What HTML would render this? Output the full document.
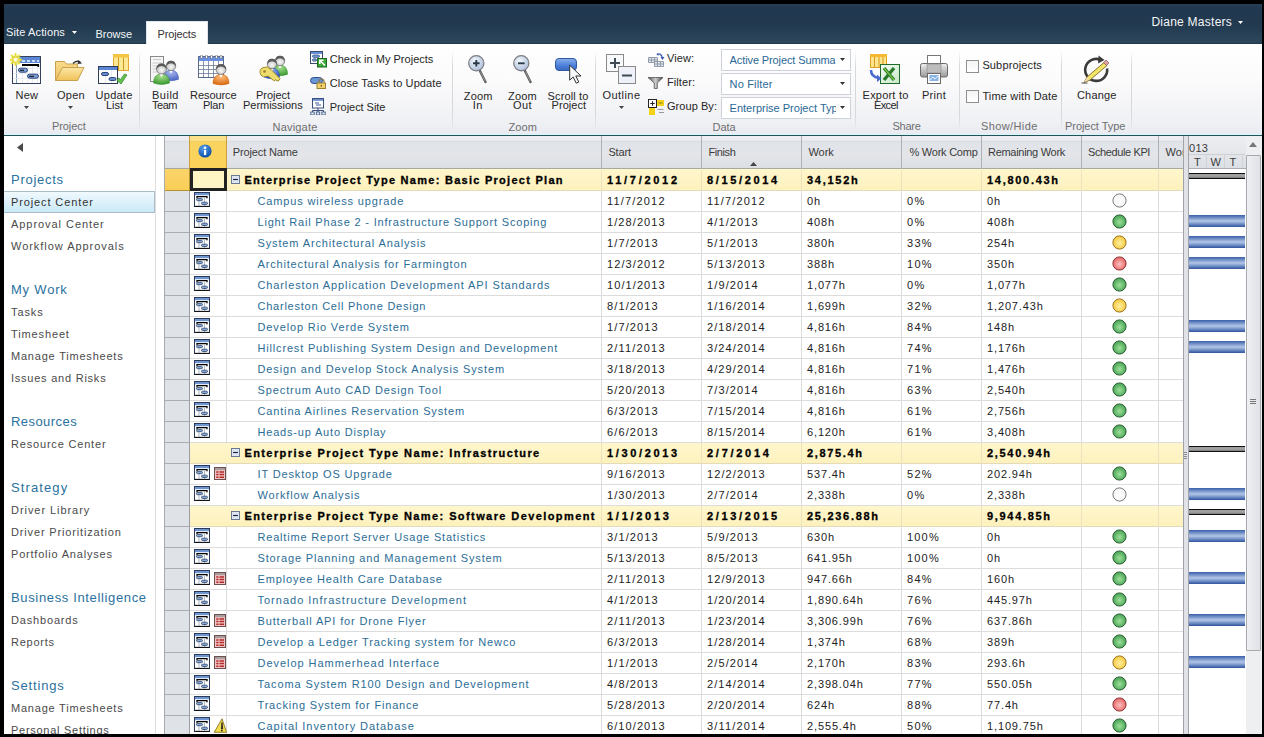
<!DOCTYPE html><html><head><meta charset="utf-8"><style>
*{margin:0;padding:0;box-sizing:border-box}
html,body{width:1264px;height:737px;overflow:hidden;background:#000}
body{position:relative;font-family:"Liberation Sans",sans-serif}
.t{position:absolute;white-space:nowrap;line-height:1}
.r{position:absolute;display:block}
</style></head><body><div class="r" style="left:4px;top:4px;width:1258px;height:40px;background:linear-gradient(#273d53 0,#203850 12%,#22394f 50%,#2a4459 88%,#2c475c 96%,#1d3040 100%)"></div><div class="t" style="left:6.00px;top:27.00px;font-size:11px;color:#f4f6f8;letter-spacing:0.127px;">Site Actions</div><svg class="r" style="left:71.5px;top:31px" width="6" height="4" viewBox="0 0 6 4"><path d="M0 0H5L2.5 3Z" fill="#fff"/></svg><div class="t" style="left:95.50px;top:29.00px;font-size:11px;color:#f4f6f8;letter-spacing:-0.013px;">Browse</div><div class="r" style="left:146px;top:21px;width:62px;height:23px;background:#fff;border:1px solid #dfe4ea;border-bottom:none"></div><div class="t" style="left:157.50px;top:29.00px;font-size:11px;color:#333;letter-spacing:-0.154px;">Projects</div><div class="t" style="left:1151.40px;top:16.00px;font-size:12px;color:#f4f6f8;letter-spacing:0.257px;">Diane Masters</div><svg class="r" style="left:1238px;top:21px" width="6" height="4" viewBox="0 0 6 4"><path d="M0 0H5L2.5 3Z" fill="#fff"/></svg><div class="r" style="left:4px;top:44px;width:1258px;height:90px;background:linear-gradient(#ffffff,#fbfbfc 40%,#f0f1f4 85%,#e9ebf3)"></div><div class="r" style="left:4px;top:134px;width:1258px;height:1px;background:#d6f6f8"></div><div class="r" style="left:4px;top:135px;width:1258px;height:1px;background:#24525a"></div><div class="r" style="left:139px;top:50px;width:1px;height:82px;background:linear-gradient(rgba(210,212,216,0),#d6d8dc 20%,#d6d8dc 80%,rgba(210,212,216,0))"></div><div class="r" style="left:452px;top:50px;width:1px;height:82px;background:linear-gradient(rgba(210,212,216,0),#d6d8dc 20%,#d6d8dc 80%,rgba(210,212,216,0))"></div><div class="r" style="left:595px;top:50px;width:1px;height:82px;background:linear-gradient(rgba(210,212,216,0),#d6d8dc 20%,#d6d8dc 80%,rgba(210,212,216,0))"></div><div class="r" style="left:855px;top:50px;width:1px;height:82px;background:linear-gradient(rgba(210,212,216,0),#d6d8dc 20%,#d6d8dc 80%,rgba(210,212,216,0))"></div><div class="r" style="left:959px;top:50px;width:1px;height:82px;background:linear-gradient(rgba(210,212,216,0),#d6d8dc 20%,#d6d8dc 80%,rgba(210,212,216,0))"></div><div class="r" style="left:1061px;top:50px;width:1px;height:82px;background:linear-gradient(rgba(210,212,216,0),#d6d8dc 20%,#d6d8dc 80%,rgba(210,212,216,0))"></div><div class="r" style="left:1131px;top:50px;width:1px;height:82px;background:linear-gradient(rgba(210,212,216,0),#d6d8dc 20%,#d6d8dc 80%,rgba(210,212,216,0))"></div><svg class="r" style="left:10px;top:53px" width="34" height="34" viewBox="0 0 34 34">
<defs><radialGradient id="g1"><stop offset="0" stop-color="#fffbd0"/><stop offset="0.5" stop-color="#f4ec70" stop-opacity="0.9"/><stop offset="1" stop-color="#f4ec70" stop-opacity="0"/></radialGradient></defs>
<rect x="2.5" y="3.5" width="28" height="27" fill="#fff" stroke="#34425e"/>
<rect x="3" y="4" width="27" height="6" fill="#5a86d4"/>
<rect x="12" y="7" width="3" height="2" fill="#c8daf4"/><rect x="17" y="7" width="3" height="2" fill="#c8daf4"/><rect x="22" y="7" width="3" height="2" fill="#c8daf4"/><rect x="27" y="7" width="2" height="2" fill="#c8daf4"/>
<path d="M6.5 10v20" stroke="#8a9cbc"/>
<path d="M12.5 13v17M17.5 13v17M22.5 13v17M27.5 13v17M3 15.5h27M3 20.5h27M3 25.5h27" stroke="#e2e8f0" stroke-width="0.8"/>
<rect x="12" y="11" width="17" height="2" fill="#000"/><rect x="27.5" y="11" width="1.6" height="3" fill="#000"/>
<rect x="8.5" y="15.2" width="9" height="4" rx="2" fill="#7f9ed4" stroke="#1f3a70" stroke-width="0.9"/><rect x="10" y="16.8" width="4" height="1" fill="#111"/>
<rect x="17.5" y="21.2" width="11" height="4" rx="2" fill="#7f9ed4" stroke="#1f3a70" stroke-width="0.9"/><rect x="19" y="22.8" width="5" height="1" fill="#111"/>
<circle cx="5.6" cy="6.7" r="6.5" fill="url(#g1)"/>
<g stroke="#e8dc30" stroke-width="1.4"><path d="M1 2l9 9M10 2l-9 9M5.6 0v13M-1 6.7h13"/></g>
<circle cx="5.6" cy="6.7" r="2" fill="#fff8e0"/></svg><div class="t" style="left:15.60px;top:90.00px;font-size:11px;color:#262626;letter-spacing:0.132px;">New</div><svg class="r" style="left:24px;top:106px" width="6" height="4" viewBox="0 0 6 4"><path d="M0 0H5L2.5 3Z" fill="#444"/></svg><svg class="r" style="left:54px;top:53px" width="34" height="34" viewBox="0 0 34 34">
<defs><linearGradient id="g2" x1="0" y1="0" x2="0" y2="1"><stop offset="0" stop-color="#f9dc8c"/><stop offset="1" stop-color="#ecc060"/></linearGradient>
<linearGradient id="g3" x1="0" y1="0" x2="0" y2="1"><stop offset="0" stop-color="#fbe6a4"/><stop offset="1" stop-color="#f0c25a"/></linearGradient></defs>
<path d="M1.5 8.5h9l2 2.5h11v16.5h-22z" fill="url(#g2)" stroke="#c9a050"/>
<path d="M1.5 27.5L8.5 14.5h21.5l-6.5 13z" fill="url(#g3)" stroke="#c9a050"/>
<path d="M19 10.5q3.5-4 7.5-1" fill="none" stroke="#333" stroke-width="1.3"/><path d="M24.5 7l3.5 3.5-4.5 0.5z" fill="#333"/></svg><div class="t" style="left:57.00px;top:90.00px;font-size:11px;color:#262626;letter-spacing:0.273px;">Open</div><svg class="r" style="left:68px;top:106px" width="6" height="4" viewBox="0 0 6 4"><path d="M0 0H5L2.5 3Z" fill="#444"/></svg><svg class="r" style="left:97px;top:53px" width="34" height="34" viewBox="0 0 34 34">
<rect x="16.5" y="1.5" width="15" height="16" fill="#fde896" stroke="#e0a830"/>
<rect x="16" y="1" width="16" height="3.5" fill="#f5c440"/>
<path d="M21.5 4.5V17.5M26.5 4.5V17.5" stroke="#d09a20"/>
<rect x="1.5" y="13.5" width="19" height="17" fill="#fff" stroke="#2e3a56"/>
<rect x="2" y="14" width="18" height="3" fill="#5a86d4"/>
<path d="M8.5 17v13M14.5 17v13" stroke="#dfe6f0" stroke-width="0.8"/>
<rect x="4.5" y="19.5" width="7" height="3" rx="1.5" fill="#6a8ed0" stroke="#1f3a70" stroke-width="0.9"/>
<rect x="12" y="24.5" width="7" height="3" rx="1.5" fill="#6a8ed0" stroke="#1f3a70" stroke-width="0.9"/>
<path d="M20 27.5l4 3.5 6-9-2.5-1-4 5.5-2-1.5z" fill="#64c050" stroke="#3a9030" stroke-width="0.8"/></svg><div class="t" style="left:95.60px;top:90.00px;font-size:11px;color:#262626;letter-spacing:0.239px;">Update</div><div class="t" style="left:106.00px;top:100.00px;font-size:11px;color:#262626;letter-spacing:-0.029px;">List</div><div class="t" style="left:52.00px;top:121.00px;font-size:11px;color:#6e6e6e;letter-spacing:-0.091px;">Project</div><svg class="r" style="left:149px;top:55px" width="32" height="32" viewBox="0 0 32 32">
<rect x="1.5" y="1.5" width="13" height="25" fill="#f6f6f6" stroke="#8a8a8a"/>
<path d="M4 4.5h8M3.5 8h10M3.5 11h10M3.5 14h10M3.5 17h10" stroke="#c0c0c0" stroke-width="0.8"/><defs><radialGradient id="g4" cx="0.5" cy="0.2" r="0.8"><stop offset="0" stop-color="#a8b8f0"/><stop offset="1" stop-color="#4a64c0"/></radialGradient>
<radialGradient id="g5" cx="0.5" cy="0.6" r="0.6"><stop offset="0" stop-color="#fafafa"/><stop offset="1" stop-color="#b8b8b8"/></radialGradient></defs>
<path d="M14.4 24.299999999999997q0-9 7.6-9q7.6 0 7.6 9q-7.6 3 -15.2 0z" fill="url(#g4)" stroke="#4a64c0" stroke-width="0.6"/>
<path d="M20.1 15.75l1.9 2.8499999999999996 1.9-2.8499999999999996z" fill="#fff"/>
<circle cx="22" cy="11" r="4.75" fill="url(#g5)" stroke="#666" stroke-width="0.7"/>
<path d="M17.25 11q0-5.225 4.75-5.225q4.75 0 4.75 5.225q-1.9-2.8499999999999996 -4.75-2.8499999999999996q-2.8499999999999996 0 -4.75 2.8499999999999996z" fill="#5a5a5a"/><defs><radialGradient id="g6" cx="0.5" cy="0.2" r="0.8"><stop offset="0" stop-color="#a8e090"/><stop offset="1" stop-color="#3a9a30"/></radialGradient>
<radialGradient id="g7" cx="0.5" cy="0.6" r="0.6"><stop offset="0" stop-color="#fafafa"/><stop offset="1" stop-color="#b8b8b8"/></radialGradient></defs>
<path d="M4.5 28.0q0-9 8.0-9q8.0 0 8.0 9q-8.0 3 -16.0 0z" fill="url(#g6)" stroke="#3a9a30" stroke-width="0.6"/>
<path d="M10.5 19.0l2.0 3.0 2.0-3.0z" fill="#fff"/>
<circle cx="12.5" cy="14" r="5.0" fill="url(#g7)" stroke="#666" stroke-width="0.7"/>
<path d="M7.5 14q0-5.5 5.0-5.5q5.0 0 5.0 5.5q-2.0-3.0 -5.0-3.0q-3.0 0 -5.0 3.0z" fill="#5a5a5a"/></svg><div class="t" style="left:152.00px;top:90.00px;font-size:11px;color:#262626;letter-spacing:0.508px;">Build</div><div class="t" style="left:152.00px;top:100.00px;font-size:11px;color:#262626;letter-spacing:-0.474px;">Team</div><svg class="r" style="left:198px;top:55px" width="34" height="34" viewBox="0 0 34 34">
<rect x="0.5" y="1.5" width="25" height="21" fill="#fff" stroke="#5a6a8a"/>
<rect x="1" y="2" width="24" height="4" fill="#6a8ee0"/>
<g fill="#fff" stroke="#444" stroke-width="0.5"><rect x="2.5" y="0" width="2" height="3.5" rx="1"/><rect x="7.5" y="0" width="2" height="3.5" rx="1"/><rect x="12.5" y="0" width="2" height="3.5" rx="1"/><rect x="17.5" y="0" width="2" height="3.5" rx="1"/><rect x="22" y="0" width="2" height="3.5" rx="1"/></g>
<path d="M1 10.5h24M1 14.5h24M1 18.5h24M5.5 6v16M10.5 6v16M15.5 6v16M20.5 6v16" stroke="#6a7a98" stroke-width="0.8"/><defs><radialGradient id="g8" cx="0.5" cy="0.2" r="0.8"><stop offset="0" stop-color="#ffc080"/><stop offset="1" stop-color="#d86a10"/></radialGradient>
<radialGradient id="g9" cx="0.5" cy="0.6" r="0.6"><stop offset="0" stop-color="#fafafa"/><stop offset="1" stop-color="#b8b8b8"/></radialGradient></defs>
<path d="M15.0 28.5q0-9 8.0-9q8.0 0 8.0 9q-8.0 3 -16.0 0z" fill="url(#g8)" stroke="#d86a10" stroke-width="0.6"/>
<path d="M21.0 19.5l2.0 3.0 2.0-3.0z" fill="#fff"/>
<circle cx="23" cy="14.5" r="5.0" fill="url(#g9)" stroke="#666" stroke-width="0.7"/>
<path d="M18.0 14.5q0-5.5 5.0-5.5q5.0 0 5.0 5.5q-2.0-3.0 -5.0-3.0q-3.0 0 -5.0 3.0z" fill="#5a5a5a"/></svg><div class="t" style="left:190.00px;top:90.00px;font-size:11px;color:#262626;letter-spacing:-0.059px;">Resource</div><div class="t" style="left:203.00px;top:100.00px;font-size:11px;color:#262626;letter-spacing:-0.254px;">Plan</div><svg class="r" style="left:258px;top:53px" width="34" height="34" viewBox="0 0 34 34"><defs><radialGradient id="g10" cx="0.5" cy="0.2" r="0.8"><stop offset="0" stop-color="#a8e090"/><stop offset="1" stop-color="#3a9a30"/></radialGradient>
<radialGradient id="g11" cx="0.5" cy="0.6" r="0.6"><stop offset="0" stop-color="#fafafa"/><stop offset="1" stop-color="#b8b8b8"/></radialGradient></defs>
<path d="M14.4 21.299999999999997q0-9 7.6-9q7.6 0 7.6 9q-7.6 3 -15.2 0z" fill="url(#g10)" stroke="#3a9a30" stroke-width="0.6"/>
<path d="M20.1 12.75l1.9 2.8499999999999996 1.9-2.8499999999999996z" fill="#fff"/>
<circle cx="22" cy="8" r="4.75" fill="url(#g11)" stroke="#666" stroke-width="0.7"/>
<path d="M17.25 8q0-5.225 4.75-5.225q4.75 0 4.75 5.225q-1.9-2.8499999999999996 -4.75-2.8499999999999996q-2.8499999999999996 0 -4.75 2.8499999999999996z" fill="#5a5a5a"/><defs><radialGradient id="g12" cx="0.5" cy="0.2" r="0.8"><stop offset="0" stop-color="#8aa8f0"/><stop offset="1" stop-color="#2a4ac0"/></radialGradient>
<radialGradient id="g13" cx="0.5" cy="0.6" r="0.6"><stop offset="0" stop-color="#fafafa"/><stop offset="1" stop-color="#b8b8b8"/></radialGradient></defs>
<path d="M6.4 24.299999999999997q0-9 7.6-9q7.6 0 7.6 9q-7.6 3 -15.2 0z" fill="url(#g12)" stroke="#2a4ac0" stroke-width="0.6"/>
<path d="M12.1 15.75l1.9 2.8499999999999996 1.9-2.8499999999999996z" fill="#fff"/>
<circle cx="14" cy="11" r="4.75" fill="url(#g13)" stroke="#666" stroke-width="0.7"/>
<path d="M9.25 11q0-5.225 4.75-5.225q4.75 0 4.75 5.225q-1.9-2.8499999999999996 -4.75-2.8499999999999996q-2.8499999999999996 0 -4.75 2.8499999999999996z" fill="#5a5a5a"/>
<path d="M3 22q-3-5 2-7.5q5-2 8 2l9 9-1 2-2 0.5-1.5-1.5-1 1.5-1.5-1-5-4q-5 2-7-1z" fill="#ecdc70" stroke="#9a8420" stroke-width="0.9"/>
<circle cx="6.5" cy="18.5" r="1.3" fill="#9a7a20"/></svg><div class="t" style="left:256.00px;top:90.00px;font-size:11px;color:#262626;letter-spacing:-0.033px;">Project</div><div class="t" style="left:243.00px;top:100.00px;font-size:11px;color:#262626;letter-spacing:-0.027px;">Permissions</div><svg class="r" style="left:310px;top:50px" width="18" height="18" viewBox="0 0 18 18">
<rect x="0.5" y="1.5" width="12" height="12" fill="#fff" stroke="#3a4a6a"/>
<rect x="1" y="2" width="11" height="2" fill="#6a90dc"/>
<rect x="2.5" y="5" width="7" height="2.4" rx="1.2" fill="#7a9ad0" stroke="#2a4a80" stroke-width="0.7"/>
<rect x="2.5" y="8.8" width="4" height="2.4" rx="1.2" fill="#7a9ad0" stroke="#2a4a80" stroke-width="0.7"/>
<rect x="7.5" y="8.5" width="9" height="8.5" fill="#3ca83c" stroke="#1a6a1a"/>
<path d="M15 15.5L10 10.5M9.8 14V10.2h3.8" stroke="#fff" stroke-width="1.5" fill="none"/></svg><div class="t" style="left:329.70px;top:54.00px;font-size:11px;color:#262626;letter-spacing:0.020px;">Check in My Projects</div><svg class="r" style="left:310px;top:76px" width="18" height="14" viewBox="0 0 18 14">
<rect x="0.5" y="1.5" width="12" height="6" rx="3" fill="#6a94d8" stroke="#30508a"/>
<path d="M9 7V5.5a2.5 2.5 0 0 1 5 0V7" fill="none" stroke="#8a7a50" stroke-width="1.2"/>
<rect x="7" y="7" width="8.5" height="5.5" fill="#f2d070" stroke="#a08030"/>
<rect x="10.7" y="9" width="1.2" height="1.6" fill="#6a5010"/></svg><div class="t" style="left:329.70px;top:78.00px;font-size:11px;color:#262626;letter-spacing:0.102px;">Close Tasks to Update</div><svg class="r" style="left:310px;top:98px" width="17" height="17" viewBox="0 0 17 17">
<rect x="2.5" y="0.5" width="11" height="9.5" fill="#fff" stroke="#3a5080"/>
<rect x="3" y="1" width="10" height="1.8" fill="#6a8ac8"/>
<path d="M5 5h4M6 7h5" stroke="#3a5a9a" stroke-width="1"/>
<path d="M8 10v2.5M2.5 12.5h11M2.5 12.5v1.5M8 12.5v1.5M13.5 12.5v1.5" stroke="#3a5080"/>
<rect x="0.8" y="14" width="3.4" height="3" fill="#dfe6f2" stroke="#3a5080" stroke-width="0.8"/><rect x="6.3" y="14" width="3.4" height="3" fill="#dfe6f2" stroke="#3a5080" stroke-width="0.8"/><rect x="11.8" y="14" width="3.4" height="3" fill="#dfe6f2" stroke="#3a5080" stroke-width="0.8"/></svg><div class="t" style="left:329.70px;top:102.00px;font-size:11px;color:#262626;letter-spacing:-0.045px;">Project Site</div><div class="t" style="left:272.50px;top:122.00px;font-size:11px;color:#6e6e6e;letter-spacing:0.198px;">Navigate</div><svg class="r" style="left:465px;top:54px" width="26" height="32" viewBox="0 0 26 32"><defs><radialGradient id="g14" cx="0.4" cy="0.35" r="0.7"><stop offset="0" stop-color="#f4f8fc"/><stop offset="1" stop-color="#aabcd8"/></radialGradient></defs>
<path d="M15 17l5.5 11" stroke="#555" stroke-width="2.4" stroke-linecap="round"/><path d="M15.3 17.5l5 10" stroke="#aaa" stroke-width="0.8"/>
<circle cx="11.3" cy="9.3" r="7.6" fill="url(#g14)" stroke="#7a7a80" stroke-width="1.2"/><path d="M8 9.3h6.6M11.3 6v6.6" stroke="#2a3a4a" stroke-width="1.9"/></svg><div class="t" style="left:463.80px;top:91.00px;font-size:11px;color:#262626;letter-spacing:0.196px;">Zoom</div><div class="t" style="left:472.80px;top:100.00px;font-size:11px;color:#262626;letter-spacing:0.414px;">In</div><svg class="r" style="left:510px;top:54px" width="26" height="32" viewBox="0 0 26 32"><defs><radialGradient id="g15" cx="0.4" cy="0.35" r="0.7"><stop offset="0" stop-color="#f4f8fc"/><stop offset="1" stop-color="#aabcd8"/></radialGradient></defs>
<path d="M15 17l5.5 11" stroke="#555" stroke-width="2.4" stroke-linecap="round"/><path d="M15.3 17.5l5 10" stroke="#aaa" stroke-width="0.8"/>
<circle cx="11.3" cy="9.3" r="7.6" fill="url(#g15)" stroke="#7a7a80" stroke-width="1.2"/><path d="M8 9.3h6.6" stroke="#2a3a4a" stroke-width="1.9"/></svg><div class="t" style="left:508.00px;top:91.00px;font-size:11px;color:#262626;letter-spacing:0.196px;">Zoom</div><div class="t" style="left:513.00px;top:100.00px;font-size:11px;color:#262626;letter-spacing:0.424px;">Out</div><svg class="r" style="left:554px;top:57px" width="30" height="28" viewBox="0 0 30 28">
<defs><linearGradient id="g16" x1="0" y1="0" x2="0" y2="1"><stop offset="0" stop-color="#8ab0ec"/><stop offset="0.6" stop-color="#4a7ed8"/><stop offset="1" stop-color="#3a68c0"/></linearGradient></defs>
<rect x="1.5" y="1.5" width="21" height="12" rx="3.5" fill="url(#g16)" stroke="#2f5aa0"/>
<path d="M15.7 8.2v15l3.5-3.2 3 6.2 2.6-1.2-3-6h5.2z" fill="#f6f8fa" stroke="#333" stroke-width="1"/></svg><div class="t" style="left:547.60px;top:91.00px;font-size:11px;color:#262626;letter-spacing:0.118px;">Scroll to</div><div class="t" style="left:551.60px;top:100.00px;font-size:11px;color:#262626;letter-spacing:0.024px;">Project</div><div class="t" style="left:508.40px;top:122.00px;font-size:11px;color:#6e6e6e;letter-spacing:0.121px;">Zoom</div><svg class="r" style="left:605px;top:53px" width="33" height="33" viewBox="0 0 33 33">
<rect x="1.5" y="1.5" width="17" height="17" fill="#f8f9fb" stroke="#8a8a8a"/>
<path d="M5 10h10M10 5v10" stroke="#3f4a54" stroke-width="2"/>
<rect x="13.5" y="13.5" width="17" height="17" fill="#eef2f8" stroke="#8a8a8a"/>
<path d="M17 22.5h10" stroke="#3f4a54" stroke-width="2"/></svg><div class="t" style="left:602.50px;top:90.00px;font-size:11px;color:#262626;letter-spacing:0.450px;">Outline</div><svg class="r" style="left:619px;top:106px" width="6" height="4" viewBox="0 0 6 4"><path d="M0 0H5L2.5 3Z" fill="#444"/></svg><svg class="r" style="left:648px;top:51px" width="17" height="17" viewBox="0 0 17 17">
<path d="M0.5 6.5h9v5h-9zM0.5 9h9M3.5 6.5v5M6.5 6.5v5" fill="#dfe4ea" stroke="#8a94a4" stroke-width="0.9"/>
<path d="M6.5 10.5h9v5h-9zM6.5 13h9M9.5 10.5v5M12.5 10.5v5" fill="#dfe4ea" stroke="#8a94a4" stroke-width="0.9"/>
<path d="M9 3.5q4-2 5.5 3.5" fill="none" stroke="#3a5ab0" stroke-width="1.3"/><path d="M12.5 6l2 3 2-3z" fill="#3a5ab0"/><path d="M10 2l-1.5 1.5 2 1.5z" fill="#3a5ab0"/></svg><div class="t" style="left:667.00px;top:53.00px;font-size:11px;color:#262626;letter-spacing:0.060px;">View:</div><svg class="r" style="left:648px;top:77px" width="16" height="12" viewBox="0 0 16 12"><defs><linearGradient id="g17"><stop offset="0" stop-color="#555"/><stop offset="0.5" stop-color="#ccc"/><stop offset="1" stop-color="#444"/></linearGradient></defs>
<path d="M0 0.5h15L9.3 6v5.5H6.2V6z" fill="url(#g17)" stroke="#333" stroke-width="0.6"/></svg><div class="t" style="left:667.00px;top:77.00px;font-size:11px;color:#262626;letter-spacing:0.072px;">Filter:</div><svg class="r" style="left:648px;top:99px" width="17" height="16" viewBox="0 0 17 16">
<rect x="0.5" y="0.5" width="8" height="8" fill="#fff" stroke="#222"/>
<path d="M2.3 4.5h4.4M4.5 2.3v4.4" stroke="#222" stroke-width="1.1"/>
<rect x="9" y="1" width="7" height="6" fill="#f2d21a"/><path d="M10.5 4h4" stroke="#8a7a10"/>
<rect x="1" y="9" width="6" height="7" fill="#f2d21a"/><path d="M9.5 10.5h6M11 13.5h5" stroke="#999"/></svg><div class="t" style="left:667.00px;top:101.00px;font-size:11px;color:#262626;letter-spacing:0.053px;">Group By:</div><div class="r" style="left:721px;top:49px;width:130px;height:22px;background:#fff;border:1px solid #cdd2d8"></div><div class="t" style="left:729.60px;top:55.00px;font-size:11px;color:#2a6896;letter-spacing:-0.110px;clip-path:inset(-2px 0 -2px 0);">Active Project Summa</div><svg class="r" style="left:840px;top:58px" width="6" height="4" viewBox="0 0 6 4"><path d="M0 0H5L2.5 3Z" fill="#333"/></svg><div class="r" style="left:721px;top:73px;width:130px;height:21.5px;background:#fff;border:1px solid #cdd2d8"></div><div class="t" style="left:729.60px;top:79.00px;font-size:11px;color:#2a6896;letter-spacing:0.160px;clip-path:inset(-2px 0 -2px 0);">No Filter</div><svg class="r" style="left:840px;top:82px" width="6" height="4" viewBox="0 0 6 4"><path d="M0 0H5L2.5 3Z" fill="#333"/></svg><div class="r" style="left:721px;top:97px;width:130px;height:21.5px;background:#fff;border:1px solid #cdd2d8"></div><div class="t" style="left:729.60px;top:103.00px;font-size:11px;color:#2a6896;clip-path:polygon(-2px -2px,106.5px -2px,106.5px 20px,-2px 20px);">Enterprise Project Typ</div><svg class="r" style="left:840px;top:106px" width="6" height="4" viewBox="0 0 6 4"><path d="M0 0H5L2.5 3Z" fill="#333"/></svg><div class="r" style="left:721px;top:70px;width:130px;height:3px;background:transparent"></div><div class="t" style="left:712.50px;top:122.00px;font-size:11px;color:#6e6e6e;letter-spacing:-0.059px;">Data</div><svg class="r" style="left:869px;top:53px" width="32" height="32" viewBox="0 0 32 32">
<defs><linearGradient id="g18" x1="0" y1="0" x2="1" y2="1"><stop offset="0" stop-color="#f4fbf4"/><stop offset="1" stop-color="#c8e8c8"/></linearGradient></defs>
<rect x="1.5" y="1.5" width="16" height="13" fill="#fde48e" stroke="#e0a020"/>
<rect x="1" y="1" width="17" height="3" fill="#f5b830"/>
<path d="M5.5 4v10.5M10 4v10.5M14 4v10.5" stroke="#d8981a"/>
<rect x="11.5" y="11.5" width="19" height="19" fill="url(#g18)" stroke="#1e6a2a"/>
<path d="M15 15l10 12M25 15l-10 12" stroke="#2a7a2a" stroke-width="3.4"/><path d="M15 15l10 12" stroke="#7ac84a" stroke-width="1.2"/>
<path d="M2 17q0 7 8 8" fill="none" stroke="#4a6ad0" stroke-width="2.6"/><path d="M8 21.5l4.5 4-4.5 3.5z" fill="#4a6ad0"/></svg><div class="t" style="left:862.60px;top:90.00px;font-size:11px;color:#262626;letter-spacing:0.209px;">Export to</div><div class="t" style="left:874.00px;top:100.00px;font-size:11px;color:#262626;letter-spacing:-0.640px;">Excel</div><svg class="r" style="left:920px;top:54px" width="30" height="31" viewBox="0 0 30 31">
<defs><linearGradient id="g19" x1="0" y1="0" x2="0" y2="1"><stop offset="0" stop-color="#f0f0f0"/><stop offset="0.5" stop-color="#c4c4c4"/><stop offset="1" stop-color="#9a9a9a"/></linearGradient></defs>
<rect x="7.5" y="1.5" width="13" height="9" fill="#fff" stroke="#777"/>
<rect x="0.5" y="9.5" width="27" height="13.5" rx="2" fill="url(#g19)" stroke="#6a6a6a"/>
<rect x="7" y="10" width="14" height="9" fill="#bdbdbd" stroke="#8a8a8a" stroke-width="0.6"/>
<rect x="7.5" y="19.5" width="13" height="10" fill="#fff" stroke="#6a6a6a"/>
<rect x="9.5" y="21" width="9" height="6" fill="#8ab4e4"/><path d="M10 26l3-3 2 2 3-3" stroke="#fff" stroke-width="0.8" fill="none"/></svg><div class="t" style="left:922.00px;top:90.00px;font-size:11px;color:#262626;letter-spacing:0.277px;">Print</div><div class="t" style="left:892.40px;top:121.00px;font-size:11px;color:#6e6e6e;letter-spacing:-0.210px;">Share</div><div class="r" style="left:966px;top:60px;width:13px;height:13px;background:linear-gradient(#f4f4f4,#fff);border:1px solid #8f8f8f"></div><div class="t" style="left:982.40px;top:60.00px;font-size:11px;color:#262626;letter-spacing:0.138px;">Subprojects</div><div class="r" style="left:966px;top:90px;width:13px;height:13px;background:linear-gradient(#f4f4f4,#fff);border:1px solid #8f8f8f"></div><div class="t" style="left:982.40px;top:91.00px;font-size:11px;color:#262626;letter-spacing:0.161px;">Time with Date</div><div class="t" style="left:981.00px;top:121.00px;font-size:11px;color:#6e6e6e;letter-spacing:0.390px;">Show/Hide</div><svg class="r" style="left:1081px;top:54px" width="30" height="32" viewBox="0 0 30 32">
<path d="M19 5.6A11 11 0 1 0 26.1 14.5" fill="none" stroke="#3a3a3a" stroke-width="2.6"/>
<path d="M17.5 1.5l6 4.5-6.5 3.5z" fill="#3a3a3a"/>
<path d="M3 28.5l3-5.5 17-14.5 3 3-17 14.5z" fill="#f2e46a" stroke="#7a6a20" stroke-width="0.9"/>
<path d="M22.5 8.5l3 3 2.5-2.5-3-3z" fill="#e0a0a0" stroke="#8a5a5a" stroke-width="0.7"/>
<path d="M3 28.5l3-5.5 2.5 2.5z" fill="#f0d8b0"/><path d="M0.5 29h6" stroke="#333" stroke-width="0.9"/></svg><div class="t" style="left:1077.00px;top:90.00px;font-size:11px;color:#262626;letter-spacing:0.178px;">Change</div><div class="t" style="left:1065.00px;top:121.00px;font-size:11px;color:#6e6e6e;letter-spacing:-0.053px;">Project Type</div><div class="r" style="left:4px;top:136px;width:151px;height:598px;background:#fff"></div><div class="r" style="left:155px;top:136px;width:1px;height:598px;background:#dedede"></div><div class="r" style="left:156px;top:136px;width:8px;height:598px;background:#fff"></div><svg class="r" style="left:16px;top:143px" width="8" height="10" viewBox="0 0 8 10"><path d="M7 0V9L1 4.5Z" fill="#4a4a4a"/></svg><div class="r" style="left:4px;top:191px;width:151px;height:22px;background:linear-gradient(#f0f9fd,#ddf1fb 50%,#c9eaf9);border:1px solid #a9bcc8;border-left:none"></div><div class="t" style="left:11.00px;top:173.00px;font-size:13px;color:#2a71a0;letter-spacing:0.730px;">Projects</div><div class="t" style="left:11.00px;top:197.00px;font-size:11px;color:#333;letter-spacing:0.885px;">Project Center</div><div class="t" style="left:11.00px;top:219.00px;font-size:11px;color:#4a4a4a;letter-spacing:0.948px;">Approval Center</div><div class="t" style="left:11.00px;top:241.00px;font-size:11px;color:#4a4a4a;letter-spacing:0.962px;">Workflow Approvals</div><div class="t" style="left:11.00px;top:283.00px;font-size:13px;color:#2a71a0;letter-spacing:0.795px;">My Work</div><div class="t" style="left:11.00px;top:307.00px;font-size:11px;color:#4a4a4a;letter-spacing:0.917px;">Tasks</div><div class="t" style="left:11.00px;top:329.00px;font-size:11px;color:#4a4a4a;letter-spacing:0.873px;">Timesheet</div><div class="t" style="left:11.00px;top:351.00px;font-size:11px;color:#4a4a4a;letter-spacing:0.791px;">Manage Timesheets</div><div class="t" style="left:11.00px;top:373.00px;font-size:11px;color:#4a4a4a;letter-spacing:0.766px;">Issues and Risks</div><div class="t" style="left:11.00px;top:415.00px;font-size:13px;color:#2a71a0;letter-spacing:0.441px;">Resources</div><div class="t" style="left:11.00px;top:439.00px;font-size:11px;color:#4a4a4a;letter-spacing:0.817px;">Resource Center</div><div class="t" style="left:11.00px;top:481.00px;font-size:13px;color:#2a71a0;letter-spacing:1.111px;">Strategy</div><div class="t" style="left:11.00px;top:505.00px;font-size:11px;color:#4a4a4a;letter-spacing:0.942px;">Driver Library</div><div class="t" style="left:11.00px;top:527.00px;font-size:11px;color:#4a4a4a;letter-spacing:0.847px;">Driver Prioritization</div><div class="t" style="left:11.00px;top:549.00px;font-size:11px;color:#4a4a4a;letter-spacing:0.793px;">Portfolio Analyses</div><div class="t" style="left:11.00px;top:591.00px;font-size:13px;color:#2a71a0;letter-spacing:0.647px;">Business Intelligence</div><div class="t" style="left:11.00px;top:615.00px;font-size:11px;color:#4a4a4a;letter-spacing:0.829px;">Dashboards</div><div class="t" style="left:11.00px;top:637.00px;font-size:11px;color:#4a4a4a;letter-spacing:0.741px;">Reports</div><div class="t" style="left:11.00px;top:679.00px;font-size:13px;color:#2a71a0;letter-spacing:0.841px;">Settings</div><div class="t" style="left:11.00px;top:703.00px;font-size:11px;color:#4a4a4a;letter-spacing:0.786px;">Manage Timesheets</div><div class="t" style="left:11.00px;top:725.00px;font-size:11px;color:#4a4a4a;letter-spacing:0.723px;">Personal Settings</div><div class="r" style="left:164px;top:136px;width:1020px;height:598px;background:#fff"></div><div class="r" style="left:164px;top:136px;width:1px;height:598px;background:#a7abb0"></div><div class="r" style="left:165px;top:136px;width:1018px;height:33px;background:linear-gradient(#eceef2,#e9ebef 15%,#e0e3e8 18%,#e3e5e9 60%,#dcdfe4);border-bottom:1px solid #a6a9a0"></div><div class="r" style="left:165px;top:136px;width:1018px;height:5px;background:linear-gradient(#f1eef5,#e7eaef)"></div><div class="r" style="left:165px;top:141px;width:1018px;height:1px;background:#d9dce1"></div><div class="r" style="left:189px;top:136px;width:1px;height:33px;background:#aeb2b8"></div><div class="r" style="left:226px;top:136px;width:1px;height:33px;background:#aeb2b8"></div><div class="r" style="left:601px;top:136px;width:1px;height:33px;background:#aeb2b8"></div><div class="r" style="left:701px;top:136px;width:1px;height:33px;background:#aeb2b8"></div><div class="r" style="left:801px;top:136px;width:1px;height:33px;background:#aeb2b8"></div><div class="r" style="left:901px;top:136px;width:1px;height:33px;background:#aeb2b8"></div><div class="r" style="left:981px;top:136px;width:1px;height:33px;background:#aeb2b8"></div><div class="r" style="left:1081px;top:136px;width:1px;height:33px;background:#aeb2b8"></div><div class="r" style="left:1158px;top:136px;width:1px;height:33px;background:#aeb2b8"></div><div class="r" style="left:1183px;top:136px;width:1px;height:33px;background:#aeb2b8"></div><div class="r" style="left:189px;top:136px;width:38px;height:33px;background:linear-gradient(#fbe08a 0,#fbe08a 5px,#f2c850 5px,#f9d360 6px,#fbd35a);border-bottom:1px solid #b89030;border-right:1px solid #c8a040;border-left:1px solid #c8a040"></div><svg class="r" style="left:198px;top:144px" width="14" height="14" viewBox="0 0 14 14"><defs><radialGradient id="ig" cx="0.4" cy="0.3" r="0.7"><stop offset="0" stop-color="#5aa2ea"/><stop offset="1" stop-color="#0d4fa8"/></radialGradient></defs><circle cx="7" cy="7" r="6.6" fill="url(#ig)"/><rect x="6" y="6" width="2.2" height="5" fill="#fff"/><circle cx="7.1" cy="3.8" r="1.2" fill="#fff"/></svg><div class="t" style="left:232.80px;top:147.00px;font-size:11px;color:#3b3b3b;letter-spacing:-0.136px;">Project Name</div><div class="t" style="left:608.40px;top:147.00px;font-size:11px;color:#3b3b3b;letter-spacing:-0.146px;">Start</div><div class="t" style="left:708.40px;top:147.00px;font-size:11px;color:#3b3b3b;letter-spacing:-0.390px;">Finish</div><svg class="r" style="left:750px;top:161.5px" width="8" height="5" viewBox="0 0 8 5"><path d="M0 4H7L3.5 0Z" fill="#444"/></svg><div class="t" style="left:808.40px;top:147.00px;font-size:11px;color:#3b3b3b;">Work</div><div class="t" style="left:909.50px;top:147.00px;font-size:11px;color:#3b3b3b;letter-spacing:-0.245px;">% Work Comp</div><div class="t" style="left:988.00px;top:147.00px;font-size:11px;color:#3b3b3b;letter-spacing:-0.293px;">Remaining Work</div><div class="t" style="left:1088.00px;top:147.00px;font-size:11px;color:#3b3b3b;letter-spacing:-0.388px;">Schedule KPI</div><div class="t" style="left:1165.50px;top:147.00px;font-size:11px;color:#3b3b3b;letter-spacing:0.134px;">Work</div><div class="r" style="left:190px;top:169px;width:993px;height:22px;background:linear-gradient(#fff6cc,#fdf1bd);border-bottom:1px solid #e2dab8"></div><div class="r" style="left:165px;top:170px;width:25px;height:21px;background:#dfe2e6;border-bottom:1px solid #a9adb3;border-right:1px solid #9a9ea4"></div><div class="r" style="left:601px;top:170px;width:1px;height:21px;background:#ebe3c0"></div><div class="r" style="left:701px;top:170px;width:1px;height:21px;background:#ebe3c0"></div><div class="r" style="left:801px;top:170px;width:1px;height:21px;background:#ebe3c0"></div><div class="r" style="left:901px;top:170px;width:1px;height:21px;background:#ebe3c0"></div><div class="r" style="left:981px;top:170px;width:1px;height:21px;background:#ebe3c0"></div><div class="r" style="left:1081px;top:170px;width:1px;height:21px;background:#ebe3c0"></div><div class="r" style="left:1158px;top:170px;width:1px;height:21px;background:#ebe3c0"></div><div class="r" style="left:1183px;top:170px;width:1px;height:21px;background:#ebe3c0"></div><svg class="r" style="left:231px;top:175px" width="10" height="10" viewBox="0 0 10 10"><rect x="0.5" y="0.5" width="8" height="8" fill="#dfe6f2" stroke="#6a7a94"/><path d="M2 4.5h5" stroke="#1a2a48" stroke-width="1.2"/></svg><div class="t" style="left:244.40px;top:175.00px;font-size:11px;color:#000;font-weight:bold;letter-spacing:1.271px;-webkit-text-stroke:0.3px #000;">Enterprise Project Type Name: Basic Project Plan</div><div class="t" style="left:607.00px;top:175.00px;font-size:11px;color:#000;font-weight:bold;letter-spacing:2.711px;-webkit-text-stroke:0.3px #000;">11/7/2012</div><div class="t" style="left:707.00px;top:175.00px;font-size:11px;color:#000;font-weight:bold;letter-spacing:2.643px;-webkit-text-stroke:0.3px #000;">8/15/2014</div><div class="t" style="left:807.00px;top:175.00px;font-size:11px;color:#000;font-weight:bold;letter-spacing:1.737px;-webkit-text-stroke:0.3px #000;">34,152h</div><div class="t" style="left:987.00px;top:175.00px;font-size:11px;color:#000;font-weight:bold;letter-spacing:1.707px;-webkit-text-stroke:0.3px #000;">14,800.43h</div><div class="r" style="left:165px;top:191px;width:25px;height:21px;background:#dfe2e6;border-bottom:1px solid #a9adb3;border-right:1px solid #9a9ea4"></div><div class="r" style="left:190px;top:211px;width:993px;height:1px;background:#dcdcdc"></div><div class="r" style="left:226px;top:191px;width:1px;height:21px;background:#dcdcdc"></div><div class="r" style="left:601px;top:191px;width:1px;height:21px;background:#dcdcdc"></div><div class="r" style="left:701px;top:191px;width:1px;height:21px;background:#dcdcdc"></div><div class="r" style="left:801px;top:191px;width:1px;height:21px;background:#dcdcdc"></div><div class="r" style="left:901px;top:191px;width:1px;height:21px;background:#dcdcdc"></div><div class="r" style="left:981px;top:191px;width:1px;height:21px;background:#dcdcdc"></div><div class="r" style="left:1081px;top:191px;width:1px;height:21px;background:#dcdcdc"></div><div class="r" style="left:1158px;top:191px;width:1px;height:21px;background:#dcdcdc"></div><div class="r" style="left:1183px;top:191px;width:1px;height:21px;background:#dcdcdc"></div><svg class="r" style="left:194px;top:192px" width="16" height="15" viewBox="0 0 16 15">
<rect x="0.5" y="0.5" width="15" height="14" fill="#fff" stroke="#2a3a5a"/>
<path d="M0.5 14.4h15" stroke="#111" stroke-width="1.1"/>
<rect x="1" y="1" width="14" height="2.2" fill="#7096d0"/>
<path d="M5 9v5M10.5 6v8" stroke="#7a8aa0" stroke-width="0.6"/>
<path d="M3 5.8V4.7H13V5.8" fill="none" stroke="#000" stroke-width="1.3" stroke-linecap="round"/>
<rect x="2.5" y="6.4" width="6" height="2.3" rx="1.15" fill="#8ba7cd" stroke="#2a4470" stroke-width="0.8"/>
<rect x="7.5" y="10.2" width="6" height="2.3" rx="1.15" fill="#8ba7cd" stroke="#2a4470" stroke-width="0.8"/></svg><div class="t" style="left:257.50px;top:196.00px;font-size:11px;color:#2b6d96;letter-spacing:0.845px;">Campus wireless upgrade</div><div class="t" style="left:607.00px;top:196.00px;font-size:11px;color:#222;letter-spacing:1.177px;">11/7/2012</div><div class="t" style="left:707.00px;top:196.00px;font-size:11px;color:#222;letter-spacing:1.177px;">11/7/2012</div><div class="t" style="left:807.00px;top:196.00px;font-size:11px;color:#222;letter-spacing:0.848px;">0h</div><div class="t" style="left:907.00px;top:196.00px;font-size:11px;color:#222;letter-spacing:1.503px;">0%</div><div class="t" style="left:987.00px;top:196.00px;font-size:11px;color:#222;letter-spacing:0.848px;">0h</div><svg class="r" style="left:1112px;top:193.4px" width="15" height="15" viewBox="0 0 15 15"><defs><radialGradient id="k1" cx="0.5" cy="0.55" r="0.6"><stop offset="0" stop-color="#ffffff"/><stop offset="1" stop-color="#f2f2f2"/></radialGradient></defs><circle cx="7.5" cy="7.5" r="6.6" fill="url(#k1)" stroke="#7a7a7a" stroke-width="1"/></svg><div class="r" style="left:165px;top:212px;width:25px;height:21px;background:#dfe2e6;border-bottom:1px solid #a9adb3;border-right:1px solid #9a9ea4"></div><div class="r" style="left:190px;top:232px;width:993px;height:1px;background:#dcdcdc"></div><div class="r" style="left:226px;top:212px;width:1px;height:21px;background:#dcdcdc"></div><div class="r" style="left:601px;top:212px;width:1px;height:21px;background:#dcdcdc"></div><div class="r" style="left:701px;top:212px;width:1px;height:21px;background:#dcdcdc"></div><div class="r" style="left:801px;top:212px;width:1px;height:21px;background:#dcdcdc"></div><div class="r" style="left:901px;top:212px;width:1px;height:21px;background:#dcdcdc"></div><div class="r" style="left:981px;top:212px;width:1px;height:21px;background:#dcdcdc"></div><div class="r" style="left:1081px;top:212px;width:1px;height:21px;background:#dcdcdc"></div><div class="r" style="left:1158px;top:212px;width:1px;height:21px;background:#dcdcdc"></div><div class="r" style="left:1183px;top:212px;width:1px;height:21px;background:#dcdcdc"></div><svg class="r" style="left:194px;top:213px" width="16" height="15" viewBox="0 0 16 15">
<rect x="0.5" y="0.5" width="15" height="14" fill="#fff" stroke="#2a3a5a"/>
<path d="M0.5 14.4h15" stroke="#111" stroke-width="1.1"/>
<rect x="1" y="1" width="14" height="2.2" fill="#7096d0"/>
<path d="M5 9v5M10.5 6v8" stroke="#7a8aa0" stroke-width="0.6"/>
<path d="M3 5.8V4.7H13V5.8" fill="none" stroke="#000" stroke-width="1.3" stroke-linecap="round"/>
<rect x="2.5" y="6.4" width="6" height="2.3" rx="1.15" fill="#8ba7cd" stroke="#2a4470" stroke-width="0.8"/>
<rect x="7.5" y="10.2" width="6" height="2.3" rx="1.15" fill="#8ba7cd" stroke="#2a4470" stroke-width="0.8"/></svg><div class="t" style="left:257.50px;top:217.00px;font-size:11px;color:#2b6d96;letter-spacing:0.813px;">Light Rail Phase 2 - Infrastructure Support Scoping</div><div class="t" style="left:607.00px;top:217.00px;font-size:11px;color:#222;letter-spacing:1.086px;">1/28/2013</div><div class="t" style="left:707.00px;top:217.00px;font-size:11px;color:#222;letter-spacing:1.116px;">4/1/2013</div><div class="t" style="left:807.00px;top:217.00px;font-size:11px;color:#222;letter-spacing:0.848px;">408h</div><div class="t" style="left:907.00px;top:217.00px;font-size:11px;color:#222;letter-spacing:1.503px;">0%</div><div class="t" style="left:987.00px;top:217.00px;font-size:11px;color:#222;letter-spacing:0.848px;">408h</div><svg class="r" style="left:1112px;top:214.4px" width="15" height="15" viewBox="0 0 15 15"><defs><radialGradient id="k2" cx="0.5" cy="0.55" r="0.6"><stop offset="0" stop-color="#9ee09a"/><stop offset="1" stop-color="#3c9c4a"/></radialGradient></defs><circle cx="7.5" cy="7.5" r="6.6" fill="url(#k2)" stroke="#2e5e34" stroke-width="1"/></svg><div class="r" style="left:165px;top:233px;width:25px;height:21px;background:#dfe2e6;border-bottom:1px solid #a9adb3;border-right:1px solid #9a9ea4"></div><div class="r" style="left:190px;top:253px;width:993px;height:1px;background:#dcdcdc"></div><div class="r" style="left:226px;top:233px;width:1px;height:21px;background:#dcdcdc"></div><div class="r" style="left:601px;top:233px;width:1px;height:21px;background:#dcdcdc"></div><div class="r" style="left:701px;top:233px;width:1px;height:21px;background:#dcdcdc"></div><div class="r" style="left:801px;top:233px;width:1px;height:21px;background:#dcdcdc"></div><div class="r" style="left:901px;top:233px;width:1px;height:21px;background:#dcdcdc"></div><div class="r" style="left:981px;top:233px;width:1px;height:21px;background:#dcdcdc"></div><div class="r" style="left:1081px;top:233px;width:1px;height:21px;background:#dcdcdc"></div><div class="r" style="left:1158px;top:233px;width:1px;height:21px;background:#dcdcdc"></div><div class="r" style="left:1183px;top:233px;width:1px;height:21px;background:#dcdcdc"></div><svg class="r" style="left:194px;top:234px" width="16" height="15" viewBox="0 0 16 15">
<rect x="0.5" y="0.5" width="15" height="14" fill="#fff" stroke="#2a3a5a"/>
<path d="M0.5 14.4h15" stroke="#111" stroke-width="1.1"/>
<rect x="1" y="1" width="14" height="2.2" fill="#7096d0"/>
<path d="M5 9v5M10.5 6v8" stroke="#7a8aa0" stroke-width="0.6"/>
<path d="M3 5.8V4.7H13V5.8" fill="none" stroke="#000" stroke-width="1.3" stroke-linecap="round"/>
<rect x="2.5" y="6.4" width="6" height="2.3" rx="1.15" fill="#8ba7cd" stroke="#2a4470" stroke-width="0.8"/>
<rect x="7.5" y="10.2" width="6" height="2.3" rx="1.15" fill="#8ba7cd" stroke="#2a4470" stroke-width="0.8"/></svg><div class="t" style="left:257.50px;top:238.00px;font-size:11px;color:#2b6d96;letter-spacing:0.870px;">System Architectural Analysis</div><div class="t" style="left:607.00px;top:238.00px;font-size:11px;color:#222;letter-spacing:1.116px;">1/7/2013</div><div class="t" style="left:707.00px;top:238.00px;font-size:11px;color:#222;letter-spacing:1.116px;">5/1/2013</div><div class="t" style="left:807.00px;top:238.00px;font-size:11px;color:#222;letter-spacing:0.848px;">380h</div><div class="t" style="left:907.00px;top:238.00px;font-size:11px;color:#222;letter-spacing:1.285px;">33%</div><div class="t" style="left:987.00px;top:238.00px;font-size:11px;color:#222;letter-spacing:0.848px;">254h</div><svg class="r" style="left:1112px;top:235.4px" width="15" height="15" viewBox="0 0 15 15"><defs><radialGradient id="k3" cx="0.5" cy="0.55" r="0.6"><stop offset="0" stop-color="#fff0a0"/><stop offset="1" stop-color="#f4c232"/></radialGradient></defs><circle cx="7.5" cy="7.5" r="6.6" fill="url(#k3)" stroke="#9a7420" stroke-width="1"/></svg><div class="r" style="left:165px;top:254px;width:25px;height:21px;background:#dfe2e6;border-bottom:1px solid #a9adb3;border-right:1px solid #9a9ea4"></div><div class="r" style="left:190px;top:274px;width:993px;height:1px;background:#dcdcdc"></div><div class="r" style="left:226px;top:254px;width:1px;height:21px;background:#dcdcdc"></div><div class="r" style="left:601px;top:254px;width:1px;height:21px;background:#dcdcdc"></div><div class="r" style="left:701px;top:254px;width:1px;height:21px;background:#dcdcdc"></div><div class="r" style="left:801px;top:254px;width:1px;height:21px;background:#dcdcdc"></div><div class="r" style="left:901px;top:254px;width:1px;height:21px;background:#dcdcdc"></div><div class="r" style="left:981px;top:254px;width:1px;height:21px;background:#dcdcdc"></div><div class="r" style="left:1081px;top:254px;width:1px;height:21px;background:#dcdcdc"></div><div class="r" style="left:1158px;top:254px;width:1px;height:21px;background:#dcdcdc"></div><div class="r" style="left:1183px;top:254px;width:1px;height:21px;background:#dcdcdc"></div><svg class="r" style="left:194px;top:255px" width="16" height="15" viewBox="0 0 16 15">
<rect x="0.5" y="0.5" width="15" height="14" fill="#fff" stroke="#2a3a5a"/>
<path d="M0.5 14.4h15" stroke="#111" stroke-width="1.1"/>
<rect x="1" y="1" width="14" height="2.2" fill="#7096d0"/>
<path d="M5 9v5M10.5 6v8" stroke="#7a8aa0" stroke-width="0.6"/>
<path d="M3 5.8V4.7H13V5.8" fill="none" stroke="#000" stroke-width="1.3" stroke-linecap="round"/>
<rect x="2.5" y="6.4" width="6" height="2.3" rx="1.15" fill="#8ba7cd" stroke="#2a4470" stroke-width="0.8"/>
<rect x="7.5" y="10.2" width="6" height="2.3" rx="1.15" fill="#8ba7cd" stroke="#2a4470" stroke-width="0.8"/></svg><div class="t" style="left:257.50px;top:259.00px;font-size:11px;color:#2b6d96;letter-spacing:0.832px;">Architectural Analysis for Farmington</div><div class="t" style="left:607.00px;top:259.00px;font-size:11px;color:#222;letter-spacing:1.086px;">12/3/2012</div><div class="t" style="left:707.00px;top:259.00px;font-size:11px;color:#222;letter-spacing:1.086px;">5/13/2013</div><div class="t" style="left:807.00px;top:259.00px;font-size:11px;color:#222;letter-spacing:0.848px;">388h</div><div class="t" style="left:907.00px;top:259.00px;font-size:11px;color:#222;letter-spacing:1.285px;">10%</div><div class="t" style="left:987.00px;top:259.00px;font-size:11px;color:#222;letter-spacing:0.848px;">350h</div><svg class="r" style="left:1112px;top:256.4px" width="15" height="15" viewBox="0 0 15 15"><defs><radialGradient id="k4" cx="0.5" cy="0.55" r="0.6"><stop offset="0" stop-color="#ffc0c0"/><stop offset="1" stop-color="#e25a5a"/></radialGradient></defs><circle cx="7.5" cy="7.5" r="6.6" fill="url(#k4)" stroke="#8a3434" stroke-width="1"/></svg><div class="r" style="left:165px;top:275px;width:25px;height:21px;background:#dfe2e6;border-bottom:1px solid #a9adb3;border-right:1px solid #9a9ea4"></div><div class="r" style="left:190px;top:295px;width:993px;height:1px;background:#dcdcdc"></div><div class="r" style="left:226px;top:275px;width:1px;height:21px;background:#dcdcdc"></div><div class="r" style="left:601px;top:275px;width:1px;height:21px;background:#dcdcdc"></div><div class="r" style="left:701px;top:275px;width:1px;height:21px;background:#dcdcdc"></div><div class="r" style="left:801px;top:275px;width:1px;height:21px;background:#dcdcdc"></div><div class="r" style="left:901px;top:275px;width:1px;height:21px;background:#dcdcdc"></div><div class="r" style="left:981px;top:275px;width:1px;height:21px;background:#dcdcdc"></div><div class="r" style="left:1081px;top:275px;width:1px;height:21px;background:#dcdcdc"></div><div class="r" style="left:1158px;top:275px;width:1px;height:21px;background:#dcdcdc"></div><div class="r" style="left:1183px;top:275px;width:1px;height:21px;background:#dcdcdc"></div><svg class="r" style="left:194px;top:276px" width="16" height="15" viewBox="0 0 16 15">
<rect x="0.5" y="0.5" width="15" height="14" fill="#fff" stroke="#2a3a5a"/>
<path d="M0.5 14.4h15" stroke="#111" stroke-width="1.1"/>
<rect x="1" y="1" width="14" height="2.2" fill="#7096d0"/>
<path d="M5 9v5M10.5 6v8" stroke="#7a8aa0" stroke-width="0.6"/>
<path d="M3 5.8V4.7H13V5.8" fill="none" stroke="#000" stroke-width="1.3" stroke-linecap="round"/>
<rect x="2.5" y="6.4" width="6" height="2.3" rx="1.15" fill="#8ba7cd" stroke="#2a4470" stroke-width="0.8"/>
<rect x="7.5" y="10.2" width="6" height="2.3" rx="1.15" fill="#8ba7cd" stroke="#2a4470" stroke-width="0.8"/></svg><div class="t" style="left:257.50px;top:280.00px;font-size:11px;color:#2b6d96;letter-spacing:0.881px;">Charleston Application Development API Standards</div><div class="t" style="left:607.00px;top:280.00px;font-size:11px;color:#222;letter-spacing:1.086px;">10/1/2013</div><div class="t" style="left:707.00px;top:280.00px;font-size:11px;color:#222;letter-spacing:1.116px;">1/9/2014</div><div class="t" style="left:807.00px;top:280.00px;font-size:11px;color:#222;letter-spacing:0.861px;">1,077h</div><div class="t" style="left:907.00px;top:280.00px;font-size:11px;color:#222;letter-spacing:1.503px;">0%</div><div class="t" style="left:987.00px;top:280.00px;font-size:11px;color:#222;letter-spacing:0.861px;">1,077h</div><svg class="r" style="left:1112px;top:277.4px" width="15" height="15" viewBox="0 0 15 15"><defs><radialGradient id="k5" cx="0.5" cy="0.55" r="0.6"><stop offset="0" stop-color="#9ee09a"/><stop offset="1" stop-color="#3c9c4a"/></radialGradient></defs><circle cx="7.5" cy="7.5" r="6.6" fill="url(#k5)" stroke="#2e5e34" stroke-width="1"/></svg><div class="r" style="left:165px;top:296px;width:25px;height:21px;background:#dfe2e6;border-bottom:1px solid #a9adb3;border-right:1px solid #9a9ea4"></div><div class="r" style="left:190px;top:316px;width:993px;height:1px;background:#dcdcdc"></div><div class="r" style="left:226px;top:296px;width:1px;height:21px;background:#dcdcdc"></div><div class="r" style="left:601px;top:296px;width:1px;height:21px;background:#dcdcdc"></div><div class="r" style="left:701px;top:296px;width:1px;height:21px;background:#dcdcdc"></div><div class="r" style="left:801px;top:296px;width:1px;height:21px;background:#dcdcdc"></div><div class="r" style="left:901px;top:296px;width:1px;height:21px;background:#dcdcdc"></div><div class="r" style="left:981px;top:296px;width:1px;height:21px;background:#dcdcdc"></div><div class="r" style="left:1081px;top:296px;width:1px;height:21px;background:#dcdcdc"></div><div class="r" style="left:1158px;top:296px;width:1px;height:21px;background:#dcdcdc"></div><div class="r" style="left:1183px;top:296px;width:1px;height:21px;background:#dcdcdc"></div><svg class="r" style="left:194px;top:297px" width="16" height="15" viewBox="0 0 16 15">
<rect x="0.5" y="0.5" width="15" height="14" fill="#fff" stroke="#2a3a5a"/>
<path d="M0.5 14.4h15" stroke="#111" stroke-width="1.1"/>
<rect x="1" y="1" width="14" height="2.2" fill="#7096d0"/>
<path d="M5 9v5M10.5 6v8" stroke="#7a8aa0" stroke-width="0.6"/>
<path d="M3 5.8V4.7H13V5.8" fill="none" stroke="#000" stroke-width="1.3" stroke-linecap="round"/>
<rect x="2.5" y="6.4" width="6" height="2.3" rx="1.15" fill="#8ba7cd" stroke="#2a4470" stroke-width="0.8"/>
<rect x="7.5" y="10.2" width="6" height="2.3" rx="1.15" fill="#8ba7cd" stroke="#2a4470" stroke-width="0.8"/></svg><div class="t" style="left:257.50px;top:301.00px;font-size:11px;color:#2b6d96;letter-spacing:0.762px;">Charleston Cell Phone Design</div><div class="t" style="left:607.00px;top:301.00px;font-size:11px;color:#222;letter-spacing:1.116px;">8/1/2013</div><div class="t" style="left:707.00px;top:301.00px;font-size:11px;color:#222;letter-spacing:1.086px;">1/16/2014</div><div class="t" style="left:807.00px;top:301.00px;font-size:11px;color:#222;letter-spacing:0.861px;">1,699h</div><div class="t" style="left:907.00px;top:301.00px;font-size:11px;color:#222;letter-spacing:1.285px;">32%</div><div class="t" style="left:987.00px;top:301.00px;font-size:11px;color:#222;letter-spacing:0.865px;">1,207.43h</div><svg class="r" style="left:1112px;top:298.4px" width="15" height="15" viewBox="0 0 15 15"><defs><radialGradient id="k6" cx="0.5" cy="0.55" r="0.6"><stop offset="0" stop-color="#fff0a0"/><stop offset="1" stop-color="#f4c232"/></radialGradient></defs><circle cx="7.5" cy="7.5" r="6.6" fill="url(#k6)" stroke="#9a7420" stroke-width="1"/></svg><div class="r" style="left:165px;top:317px;width:25px;height:21px;background:#dfe2e6;border-bottom:1px solid #a9adb3;border-right:1px solid #9a9ea4"></div><div class="r" style="left:190px;top:337px;width:993px;height:1px;background:#dcdcdc"></div><div class="r" style="left:226px;top:317px;width:1px;height:21px;background:#dcdcdc"></div><div class="r" style="left:601px;top:317px;width:1px;height:21px;background:#dcdcdc"></div><div class="r" style="left:701px;top:317px;width:1px;height:21px;background:#dcdcdc"></div><div class="r" style="left:801px;top:317px;width:1px;height:21px;background:#dcdcdc"></div><div class="r" style="left:901px;top:317px;width:1px;height:21px;background:#dcdcdc"></div><div class="r" style="left:981px;top:317px;width:1px;height:21px;background:#dcdcdc"></div><div class="r" style="left:1081px;top:317px;width:1px;height:21px;background:#dcdcdc"></div><div class="r" style="left:1158px;top:317px;width:1px;height:21px;background:#dcdcdc"></div><div class="r" style="left:1183px;top:317px;width:1px;height:21px;background:#dcdcdc"></div><svg class="r" style="left:194px;top:318px" width="16" height="15" viewBox="0 0 16 15">
<rect x="0.5" y="0.5" width="15" height="14" fill="#fff" stroke="#2a3a5a"/>
<path d="M0.5 14.4h15" stroke="#111" stroke-width="1.1"/>
<rect x="1" y="1" width="14" height="2.2" fill="#7096d0"/>
<path d="M5 9v5M10.5 6v8" stroke="#7a8aa0" stroke-width="0.6"/>
<path d="M3 5.8V4.7H13V5.8" fill="none" stroke="#000" stroke-width="1.3" stroke-linecap="round"/>
<rect x="2.5" y="6.4" width="6" height="2.3" rx="1.15" fill="#8ba7cd" stroke="#2a4470" stroke-width="0.8"/>
<rect x="7.5" y="10.2" width="6" height="2.3" rx="1.15" fill="#8ba7cd" stroke="#2a4470" stroke-width="0.8"/></svg><div class="t" style="left:257.50px;top:322.00px;font-size:11px;color:#2b6d96;letter-spacing:0.865px;">Develop Rio Verde System</div><div class="t" style="left:607.00px;top:322.00px;font-size:11px;color:#222;letter-spacing:1.116px;">1/7/2013</div><div class="t" style="left:707.00px;top:322.00px;font-size:11px;color:#222;letter-spacing:1.086px;">2/18/2014</div><div class="t" style="left:807.00px;top:322.00px;font-size:11px;color:#222;letter-spacing:0.861px;">4,816h</div><div class="t" style="left:907.00px;top:322.00px;font-size:11px;color:#222;letter-spacing:1.285px;">84%</div><div class="t" style="left:987.00px;top:322.00px;font-size:11px;color:#222;letter-spacing:0.848px;">148h</div><svg class="r" style="left:1112px;top:319.4px" width="15" height="15" viewBox="0 0 15 15"><defs><radialGradient id="k7" cx="0.5" cy="0.55" r="0.6"><stop offset="0" stop-color="#9ee09a"/><stop offset="1" stop-color="#3c9c4a"/></radialGradient></defs><circle cx="7.5" cy="7.5" r="6.6" fill="url(#k7)" stroke="#2e5e34" stroke-width="1"/></svg><div class="r" style="left:165px;top:338px;width:25px;height:21px;background:#dfe2e6;border-bottom:1px solid #a9adb3;border-right:1px solid #9a9ea4"></div><div class="r" style="left:190px;top:358px;width:993px;height:1px;background:#dcdcdc"></div><div class="r" style="left:226px;top:338px;width:1px;height:21px;background:#dcdcdc"></div><div class="r" style="left:601px;top:338px;width:1px;height:21px;background:#dcdcdc"></div><div class="r" style="left:701px;top:338px;width:1px;height:21px;background:#dcdcdc"></div><div class="r" style="left:801px;top:338px;width:1px;height:21px;background:#dcdcdc"></div><div class="r" style="left:901px;top:338px;width:1px;height:21px;background:#dcdcdc"></div><div class="r" style="left:981px;top:338px;width:1px;height:21px;background:#dcdcdc"></div><div class="r" style="left:1081px;top:338px;width:1px;height:21px;background:#dcdcdc"></div><div class="r" style="left:1158px;top:338px;width:1px;height:21px;background:#dcdcdc"></div><div class="r" style="left:1183px;top:338px;width:1px;height:21px;background:#dcdcdc"></div><svg class="r" style="left:194px;top:339px" width="16" height="15" viewBox="0 0 16 15">
<rect x="0.5" y="0.5" width="15" height="14" fill="#fff" stroke="#2a3a5a"/>
<path d="M0.5 14.4h15" stroke="#111" stroke-width="1.1"/>
<rect x="1" y="1" width="14" height="2.2" fill="#7096d0"/>
<path d="M5 9v5M10.5 6v8" stroke="#7a8aa0" stroke-width="0.6"/>
<path d="M3 5.8V4.7H13V5.8" fill="none" stroke="#000" stroke-width="1.3" stroke-linecap="round"/>
<rect x="2.5" y="6.4" width="6" height="2.3" rx="1.15" fill="#8ba7cd" stroke="#2a4470" stroke-width="0.8"/>
<rect x="7.5" y="10.2" width="6" height="2.3" rx="1.15" fill="#8ba7cd" stroke="#2a4470" stroke-width="0.8"/></svg><div class="t" style="left:257.50px;top:343.00px;font-size:11px;color:#2b6d96;letter-spacing:0.828px;">Hillcrest Publishing System Design and Development</div><div class="t" style="left:607.00px;top:343.00px;font-size:11px;color:#222;letter-spacing:1.177px;">2/11/2013</div><div class="t" style="left:707.00px;top:343.00px;font-size:11px;color:#222;letter-spacing:1.086px;">3/24/2014</div><div class="t" style="left:807.00px;top:343.00px;font-size:11px;color:#222;letter-spacing:0.861px;">4,816h</div><div class="t" style="left:907.00px;top:343.00px;font-size:11px;color:#222;letter-spacing:1.285px;">74%</div><div class="t" style="left:987.00px;top:343.00px;font-size:11px;color:#222;letter-spacing:0.861px;">1,176h</div><svg class="r" style="left:1112px;top:340.4px" width="15" height="15" viewBox="0 0 15 15"><defs><radialGradient id="k8" cx="0.5" cy="0.55" r="0.6"><stop offset="0" stop-color="#9ee09a"/><stop offset="1" stop-color="#3c9c4a"/></radialGradient></defs><circle cx="7.5" cy="7.5" r="6.6" fill="url(#k8)" stroke="#2e5e34" stroke-width="1"/></svg><div class="r" style="left:165px;top:359px;width:25px;height:21px;background:#dfe2e6;border-bottom:1px solid #a9adb3;border-right:1px solid #9a9ea4"></div><div class="r" style="left:190px;top:379px;width:993px;height:1px;background:#dcdcdc"></div><div class="r" style="left:226px;top:359px;width:1px;height:21px;background:#dcdcdc"></div><div class="r" style="left:601px;top:359px;width:1px;height:21px;background:#dcdcdc"></div><div class="r" style="left:701px;top:359px;width:1px;height:21px;background:#dcdcdc"></div><div class="r" style="left:801px;top:359px;width:1px;height:21px;background:#dcdcdc"></div><div class="r" style="left:901px;top:359px;width:1px;height:21px;background:#dcdcdc"></div><div class="r" style="left:981px;top:359px;width:1px;height:21px;background:#dcdcdc"></div><div class="r" style="left:1081px;top:359px;width:1px;height:21px;background:#dcdcdc"></div><div class="r" style="left:1158px;top:359px;width:1px;height:21px;background:#dcdcdc"></div><div class="r" style="left:1183px;top:359px;width:1px;height:21px;background:#dcdcdc"></div><svg class="r" style="left:194px;top:360px" width="16" height="15" viewBox="0 0 16 15">
<rect x="0.5" y="0.5" width="15" height="14" fill="#fff" stroke="#2a3a5a"/>
<path d="M0.5 14.4h15" stroke="#111" stroke-width="1.1"/>
<rect x="1" y="1" width="14" height="2.2" fill="#7096d0"/>
<path d="M5 9v5M10.5 6v8" stroke="#7a8aa0" stroke-width="0.6"/>
<path d="M3 5.8V4.7H13V5.8" fill="none" stroke="#000" stroke-width="1.3" stroke-linecap="round"/>
<rect x="2.5" y="6.4" width="6" height="2.3" rx="1.15" fill="#8ba7cd" stroke="#2a4470" stroke-width="0.8"/>
<rect x="7.5" y="10.2" width="6" height="2.3" rx="1.15" fill="#8ba7cd" stroke="#2a4470" stroke-width="0.8"/></svg><div class="t" style="left:257.50px;top:364.00px;font-size:11px;color:#2b6d96;letter-spacing:0.866px;">Design and Develop Stock Analysis System</div><div class="t" style="left:607.00px;top:364.00px;font-size:11px;color:#222;letter-spacing:1.086px;">3/18/2013</div><div class="t" style="left:707.00px;top:364.00px;font-size:11px;color:#222;letter-spacing:1.086px;">4/29/2014</div><div class="t" style="left:807.00px;top:364.00px;font-size:11px;color:#222;letter-spacing:0.861px;">4,816h</div><div class="t" style="left:907.00px;top:364.00px;font-size:11px;color:#222;letter-spacing:1.285px;">71%</div><div class="t" style="left:987.00px;top:364.00px;font-size:11px;color:#222;letter-spacing:0.861px;">1,476h</div><svg class="r" style="left:1112px;top:361.4px" width="15" height="15" viewBox="0 0 15 15"><defs><radialGradient id="k9" cx="0.5" cy="0.55" r="0.6"><stop offset="0" stop-color="#9ee09a"/><stop offset="1" stop-color="#3c9c4a"/></radialGradient></defs><circle cx="7.5" cy="7.5" r="6.6" fill="url(#k9)" stroke="#2e5e34" stroke-width="1"/></svg><div class="r" style="left:165px;top:380px;width:25px;height:21px;background:#dfe2e6;border-bottom:1px solid #a9adb3;border-right:1px solid #9a9ea4"></div><div class="r" style="left:190px;top:400px;width:993px;height:1px;background:#dcdcdc"></div><div class="r" style="left:226px;top:380px;width:1px;height:21px;background:#dcdcdc"></div><div class="r" style="left:601px;top:380px;width:1px;height:21px;background:#dcdcdc"></div><div class="r" style="left:701px;top:380px;width:1px;height:21px;background:#dcdcdc"></div><div class="r" style="left:801px;top:380px;width:1px;height:21px;background:#dcdcdc"></div><div class="r" style="left:901px;top:380px;width:1px;height:21px;background:#dcdcdc"></div><div class="r" style="left:981px;top:380px;width:1px;height:21px;background:#dcdcdc"></div><div class="r" style="left:1081px;top:380px;width:1px;height:21px;background:#dcdcdc"></div><div class="r" style="left:1158px;top:380px;width:1px;height:21px;background:#dcdcdc"></div><div class="r" style="left:1183px;top:380px;width:1px;height:21px;background:#dcdcdc"></div><svg class="r" style="left:194px;top:381px" width="16" height="15" viewBox="0 0 16 15">
<rect x="0.5" y="0.5" width="15" height="14" fill="#fff" stroke="#2a3a5a"/>
<path d="M0.5 14.4h15" stroke="#111" stroke-width="1.1"/>
<rect x="1" y="1" width="14" height="2.2" fill="#7096d0"/>
<path d="M5 9v5M10.5 6v8" stroke="#7a8aa0" stroke-width="0.6"/>
<path d="M3 5.8V4.7H13V5.8" fill="none" stroke="#000" stroke-width="1.3" stroke-linecap="round"/>
<rect x="2.5" y="6.4" width="6" height="2.3" rx="1.15" fill="#8ba7cd" stroke="#2a4470" stroke-width="0.8"/>
<rect x="7.5" y="10.2" width="6" height="2.3" rx="1.15" fill="#8ba7cd" stroke="#2a4470" stroke-width="0.8"/></svg><div class="t" style="left:257.50px;top:385.00px;font-size:11px;color:#2b6d96;letter-spacing:0.891px;">Spectrum Auto CAD Design Tool</div><div class="t" style="left:607.00px;top:385.00px;font-size:11px;color:#222;letter-spacing:1.086px;">5/20/2013</div><div class="t" style="left:707.00px;top:385.00px;font-size:11px;color:#222;letter-spacing:1.116px;">7/3/2014</div><div class="t" style="left:807.00px;top:385.00px;font-size:11px;color:#222;letter-spacing:0.861px;">4,816h</div><div class="t" style="left:907.00px;top:385.00px;font-size:11px;color:#222;letter-spacing:1.285px;">63%</div><div class="t" style="left:987.00px;top:385.00px;font-size:11px;color:#222;letter-spacing:0.861px;">2,540h</div><svg class="r" style="left:1112px;top:382.4px" width="15" height="15" viewBox="0 0 15 15"><defs><radialGradient id="k10" cx="0.5" cy="0.55" r="0.6"><stop offset="0" stop-color="#9ee09a"/><stop offset="1" stop-color="#3c9c4a"/></radialGradient></defs><circle cx="7.5" cy="7.5" r="6.6" fill="url(#k10)" stroke="#2e5e34" stroke-width="1"/></svg><div class="r" style="left:165px;top:401px;width:25px;height:21px;background:#dfe2e6;border-bottom:1px solid #a9adb3;border-right:1px solid #9a9ea4"></div><div class="r" style="left:190px;top:421px;width:993px;height:1px;background:#dcdcdc"></div><div class="r" style="left:226px;top:401px;width:1px;height:21px;background:#dcdcdc"></div><div class="r" style="left:601px;top:401px;width:1px;height:21px;background:#dcdcdc"></div><div class="r" style="left:701px;top:401px;width:1px;height:21px;background:#dcdcdc"></div><div class="r" style="left:801px;top:401px;width:1px;height:21px;background:#dcdcdc"></div><div class="r" style="left:901px;top:401px;width:1px;height:21px;background:#dcdcdc"></div><div class="r" style="left:981px;top:401px;width:1px;height:21px;background:#dcdcdc"></div><div class="r" style="left:1081px;top:401px;width:1px;height:21px;background:#dcdcdc"></div><div class="r" style="left:1158px;top:401px;width:1px;height:21px;background:#dcdcdc"></div><div class="r" style="left:1183px;top:401px;width:1px;height:21px;background:#dcdcdc"></div><svg class="r" style="left:194px;top:402px" width="16" height="15" viewBox="0 0 16 15">
<rect x="0.5" y="0.5" width="15" height="14" fill="#fff" stroke="#2a3a5a"/>
<path d="M0.5 14.4h15" stroke="#111" stroke-width="1.1"/>
<rect x="1" y="1" width="14" height="2.2" fill="#7096d0"/>
<path d="M5 9v5M10.5 6v8" stroke="#7a8aa0" stroke-width="0.6"/>
<path d="M3 5.8V4.7H13V5.8" fill="none" stroke="#000" stroke-width="1.3" stroke-linecap="round"/>
<rect x="2.5" y="6.4" width="6" height="2.3" rx="1.15" fill="#8ba7cd" stroke="#2a4470" stroke-width="0.8"/>
<rect x="7.5" y="10.2" width="6" height="2.3" rx="1.15" fill="#8ba7cd" stroke="#2a4470" stroke-width="0.8"/></svg><div class="t" style="left:257.50px;top:406.00px;font-size:11px;color:#2b6d96;letter-spacing:0.843px;">Cantina Airlines Reservation System</div><div class="t" style="left:607.00px;top:406.00px;font-size:11px;color:#222;letter-spacing:1.116px;">6/3/2013</div><div class="t" style="left:707.00px;top:406.00px;font-size:11px;color:#222;letter-spacing:1.086px;">7/15/2014</div><div class="t" style="left:807.00px;top:406.00px;font-size:11px;color:#222;letter-spacing:0.861px;">4,816h</div><div class="t" style="left:907.00px;top:406.00px;font-size:11px;color:#222;letter-spacing:1.285px;">61%</div><div class="t" style="left:987.00px;top:406.00px;font-size:11px;color:#222;letter-spacing:0.861px;">2,756h</div><svg class="r" style="left:1112px;top:403.4px" width="15" height="15" viewBox="0 0 15 15"><defs><radialGradient id="k11" cx="0.5" cy="0.55" r="0.6"><stop offset="0" stop-color="#9ee09a"/><stop offset="1" stop-color="#3c9c4a"/></radialGradient></defs><circle cx="7.5" cy="7.5" r="6.6" fill="url(#k11)" stroke="#2e5e34" stroke-width="1"/></svg><div class="r" style="left:165px;top:422px;width:25px;height:21px;background:#dfe2e6;border-bottom:1px solid #a9adb3;border-right:1px solid #9a9ea4"></div><div class="r" style="left:190px;top:442px;width:993px;height:1px;background:#dcdcdc"></div><div class="r" style="left:226px;top:422px;width:1px;height:21px;background:#dcdcdc"></div><div class="r" style="left:601px;top:422px;width:1px;height:21px;background:#dcdcdc"></div><div class="r" style="left:701px;top:422px;width:1px;height:21px;background:#dcdcdc"></div><div class="r" style="left:801px;top:422px;width:1px;height:21px;background:#dcdcdc"></div><div class="r" style="left:901px;top:422px;width:1px;height:21px;background:#dcdcdc"></div><div class="r" style="left:981px;top:422px;width:1px;height:21px;background:#dcdcdc"></div><div class="r" style="left:1081px;top:422px;width:1px;height:21px;background:#dcdcdc"></div><div class="r" style="left:1158px;top:422px;width:1px;height:21px;background:#dcdcdc"></div><div class="r" style="left:1183px;top:422px;width:1px;height:21px;background:#dcdcdc"></div><svg class="r" style="left:194px;top:423px" width="16" height="15" viewBox="0 0 16 15">
<rect x="0.5" y="0.5" width="15" height="14" fill="#fff" stroke="#2a3a5a"/>
<path d="M0.5 14.4h15" stroke="#111" stroke-width="1.1"/>
<rect x="1" y="1" width="14" height="2.2" fill="#7096d0"/>
<path d="M5 9v5M10.5 6v8" stroke="#7a8aa0" stroke-width="0.6"/>
<path d="M3 5.8V4.7H13V5.8" fill="none" stroke="#000" stroke-width="1.3" stroke-linecap="round"/>
<rect x="2.5" y="6.4" width="6" height="2.3" rx="1.15" fill="#8ba7cd" stroke="#2a4470" stroke-width="0.8"/>
<rect x="7.5" y="10.2" width="6" height="2.3" rx="1.15" fill="#8ba7cd" stroke="#2a4470" stroke-width="0.8"/></svg><div class="t" style="left:257.50px;top:427.00px;font-size:11px;color:#2b6d96;letter-spacing:0.810px;">Heads-up Auto Display</div><div class="t" style="left:607.00px;top:427.00px;font-size:11px;color:#222;letter-spacing:1.116px;">6/6/2013</div><div class="t" style="left:707.00px;top:427.00px;font-size:11px;color:#222;letter-spacing:1.086px;">8/15/2014</div><div class="t" style="left:807.00px;top:427.00px;font-size:11px;color:#222;letter-spacing:0.861px;">6,120h</div><div class="t" style="left:907.00px;top:427.00px;font-size:11px;color:#222;letter-spacing:1.285px;">61%</div><div class="t" style="left:987.00px;top:427.00px;font-size:11px;color:#222;letter-spacing:0.861px;">3,408h</div><svg class="r" style="left:1112px;top:424.4px" width="15" height="15" viewBox="0 0 15 15"><defs><radialGradient id="k12" cx="0.5" cy="0.55" r="0.6"><stop offset="0" stop-color="#9ee09a"/><stop offset="1" stop-color="#3c9c4a"/></radialGradient></defs><circle cx="7.5" cy="7.5" r="6.6" fill="url(#k12)" stroke="#2e5e34" stroke-width="1"/></svg><div class="r" style="left:190px;top:443px;width:993px;height:21px;background:linear-gradient(#fff6cc,#fdf1bd);border-bottom:1px solid #e2dab8"></div><div class="r" style="left:165px;top:443px;width:25px;height:21px;background:#dfe2e6;border-bottom:1px solid #a9adb3;border-right:1px solid #9a9ea4"></div><div class="r" style="left:601px;top:443px;width:1px;height:21px;background:#ebe3c0"></div><div class="r" style="left:701px;top:443px;width:1px;height:21px;background:#ebe3c0"></div><div class="r" style="left:801px;top:443px;width:1px;height:21px;background:#ebe3c0"></div><div class="r" style="left:901px;top:443px;width:1px;height:21px;background:#ebe3c0"></div><div class="r" style="left:981px;top:443px;width:1px;height:21px;background:#ebe3c0"></div><div class="r" style="left:1081px;top:443px;width:1px;height:21px;background:#ebe3c0"></div><div class="r" style="left:1158px;top:443px;width:1px;height:21px;background:#ebe3c0"></div><div class="r" style="left:1183px;top:443px;width:1px;height:21px;background:#ebe3c0"></div><svg class="r" style="left:231px;top:448px" width="10" height="10" viewBox="0 0 10 10"><rect x="0.5" y="0.5" width="8" height="8" fill="#dfe6f2" stroke="#6a7a94"/><path d="M2 4.5h5" stroke="#1a2a48" stroke-width="1.2"/></svg><div class="t" style="left:244.40px;top:448.00px;font-size:11px;color:#000;font-weight:bold;letter-spacing:1.416px;-webkit-text-stroke:0.3px #000;">Enterprise Project Type Name: Infrastructure</div><div class="t" style="left:607.00px;top:448.00px;font-size:11px;color:#000;font-weight:bold;letter-spacing:2.643px;-webkit-text-stroke:0.3px #000;">1/30/2013</div><div class="t" style="left:707.00px;top:448.00px;font-size:11px;color:#000;font-weight:bold;letter-spacing:2.728px;-webkit-text-stroke:0.3px #000;">2/7/2014</div><div class="t" style="left:807.00px;top:448.00px;font-size:11px;color:#000;font-weight:bold;letter-spacing:1.643px;-webkit-text-stroke:0.3px #000;">2,875.4h</div><div class="t" style="left:987.00px;top:448.00px;font-size:11px;color:#000;font-weight:bold;letter-spacing:1.679px;-webkit-text-stroke:0.3px #000;">2,540.94h</div><div class="r" style="left:165px;top:464px;width:25px;height:21px;background:#dfe2e6;border-bottom:1px solid #a9adb3;border-right:1px solid #9a9ea4"></div><div class="r" style="left:190px;top:484px;width:993px;height:1px;background:#dcdcdc"></div><div class="r" style="left:226px;top:464px;width:1px;height:21px;background:#dcdcdc"></div><div class="r" style="left:601px;top:464px;width:1px;height:21px;background:#dcdcdc"></div><div class="r" style="left:701px;top:464px;width:1px;height:21px;background:#dcdcdc"></div><div class="r" style="left:801px;top:464px;width:1px;height:21px;background:#dcdcdc"></div><div class="r" style="left:901px;top:464px;width:1px;height:21px;background:#dcdcdc"></div><div class="r" style="left:981px;top:464px;width:1px;height:21px;background:#dcdcdc"></div><div class="r" style="left:1081px;top:464px;width:1px;height:21px;background:#dcdcdc"></div><div class="r" style="left:1158px;top:464px;width:1px;height:21px;background:#dcdcdc"></div><div class="r" style="left:1183px;top:464px;width:1px;height:21px;background:#dcdcdc"></div><svg class="r" style="left:194px;top:465px" width="16" height="15" viewBox="0 0 16 15">
<rect x="0.5" y="0.5" width="15" height="14" fill="#fff" stroke="#2a3a5a"/>
<path d="M0.5 14.4h15" stroke="#111" stroke-width="1.1"/>
<rect x="1" y="1" width="14" height="2.2" fill="#7096d0"/>
<path d="M5 9v5M10.5 6v8" stroke="#7a8aa0" stroke-width="0.6"/>
<path d="M3 5.8V4.7H13V5.8" fill="none" stroke="#000" stroke-width="1.3" stroke-linecap="round"/>
<rect x="2.5" y="6.4" width="6" height="2.3" rx="1.15" fill="#8ba7cd" stroke="#2a4470" stroke-width="0.8"/>
<rect x="7.5" y="10.2" width="6" height="2.3" rx="1.15" fill="#8ba7cd" stroke="#2a4470" stroke-width="0.8"/></svg><svg class="r" style="left:214px;top:467px" width="12" height="13" viewBox="0 0 12 13">
<rect x="0.5" y="0.5" width="11" height="12" fill="#f4c4c4" stroke="#6a5050"/>
<rect x="1" y="1" width="10" height="2.2" fill="#a89c9c"/>
<path d="M2.3 5h2.2M5.5 5h4.5M2.3 7.6h2.2M5.5 7.6h4.5M2.3 10.2h2.2M5.5 10.2h4.5" stroke="#b02828" stroke-width="1.5"/></svg><div class="t" style="left:257.50px;top:469.00px;font-size:11px;color:#2b6d96;letter-spacing:0.858px;">IT Desktop OS Upgrade</div><div class="t" style="left:607.00px;top:469.00px;font-size:11px;color:#222;letter-spacing:1.086px;">9/16/2013</div><div class="t" style="left:707.00px;top:469.00px;font-size:11px;color:#222;letter-spacing:1.086px;">12/2/2013</div><div class="t" style="left:807.00px;top:469.00px;font-size:11px;color:#222;letter-spacing:0.861px;">537.4h</div><div class="t" style="left:907.00px;top:469.00px;font-size:11px;color:#222;letter-spacing:1.285px;">52%</div><div class="t" style="left:987.00px;top:469.00px;font-size:11px;color:#222;letter-spacing:0.859px;">202.94h</div><svg class="r" style="left:1112px;top:466.4px" width="15" height="15" viewBox="0 0 15 15"><defs><radialGradient id="k14" cx="0.5" cy="0.55" r="0.6"><stop offset="0" stop-color="#9ee09a"/><stop offset="1" stop-color="#3c9c4a"/></radialGradient></defs><circle cx="7.5" cy="7.5" r="6.6" fill="url(#k14)" stroke="#2e5e34" stroke-width="1"/></svg><div class="r" style="left:165px;top:485px;width:25px;height:21px;background:#dfe2e6;border-bottom:1px solid #a9adb3;border-right:1px solid #9a9ea4"></div><div class="r" style="left:190px;top:505px;width:993px;height:1px;background:#dcdcdc"></div><div class="r" style="left:226px;top:485px;width:1px;height:21px;background:#dcdcdc"></div><div class="r" style="left:601px;top:485px;width:1px;height:21px;background:#dcdcdc"></div><div class="r" style="left:701px;top:485px;width:1px;height:21px;background:#dcdcdc"></div><div class="r" style="left:801px;top:485px;width:1px;height:21px;background:#dcdcdc"></div><div class="r" style="left:901px;top:485px;width:1px;height:21px;background:#dcdcdc"></div><div class="r" style="left:981px;top:485px;width:1px;height:21px;background:#dcdcdc"></div><div class="r" style="left:1081px;top:485px;width:1px;height:21px;background:#dcdcdc"></div><div class="r" style="left:1158px;top:485px;width:1px;height:21px;background:#dcdcdc"></div><div class="r" style="left:1183px;top:485px;width:1px;height:21px;background:#dcdcdc"></div><svg class="r" style="left:194px;top:486px" width="16" height="15" viewBox="0 0 16 15">
<rect x="0.5" y="0.5" width="15" height="14" fill="#fff" stroke="#2a3a5a"/>
<path d="M0.5 14.4h15" stroke="#111" stroke-width="1.1"/>
<rect x="1" y="1" width="14" height="2.2" fill="#7096d0"/>
<path d="M5 9v5M10.5 6v8" stroke="#7a8aa0" stroke-width="0.6"/>
<path d="M3 5.8V4.7H13V5.8" fill="none" stroke="#000" stroke-width="1.3" stroke-linecap="round"/>
<rect x="2.5" y="6.4" width="6" height="2.3" rx="1.15" fill="#8ba7cd" stroke="#2a4470" stroke-width="0.8"/>
<rect x="7.5" y="10.2" width="6" height="2.3" rx="1.15" fill="#8ba7cd" stroke="#2a4470" stroke-width="0.8"/></svg><div class="t" style="left:257.50px;top:490.00px;font-size:11px;color:#2b6d96;letter-spacing:0.851px;">Workflow Analysis</div><div class="t" style="left:607.00px;top:490.00px;font-size:11px;color:#222;letter-spacing:1.086px;">1/30/2013</div><div class="t" style="left:707.00px;top:490.00px;font-size:11px;color:#222;letter-spacing:1.116px;">2/7/2014</div><div class="t" style="left:807.00px;top:490.00px;font-size:11px;color:#222;letter-spacing:0.861px;">2,338h</div><div class="t" style="left:907.00px;top:490.00px;font-size:11px;color:#222;letter-spacing:1.503px;">0%</div><div class="t" style="left:987.00px;top:490.00px;font-size:11px;color:#222;letter-spacing:0.861px;">2,338h</div><svg class="r" style="left:1112px;top:487.4px" width="15" height="15" viewBox="0 0 15 15"><defs><radialGradient id="k15" cx="0.5" cy="0.55" r="0.6"><stop offset="0" stop-color="#ffffff"/><stop offset="1" stop-color="#f2f2f2"/></radialGradient></defs><circle cx="7.5" cy="7.5" r="6.6" fill="url(#k15)" stroke="#7a7a7a" stroke-width="1"/></svg><div class="r" style="left:190px;top:506px;width:993px;height:21px;background:linear-gradient(#fff6cc,#fdf1bd);border-bottom:1px solid #e2dab8"></div><div class="r" style="left:165px;top:506px;width:25px;height:21px;background:#dfe2e6;border-bottom:1px solid #a9adb3;border-right:1px solid #9a9ea4"></div><div class="r" style="left:601px;top:506px;width:1px;height:21px;background:#ebe3c0"></div><div class="r" style="left:701px;top:506px;width:1px;height:21px;background:#ebe3c0"></div><div class="r" style="left:801px;top:506px;width:1px;height:21px;background:#ebe3c0"></div><div class="r" style="left:901px;top:506px;width:1px;height:21px;background:#ebe3c0"></div><div class="r" style="left:981px;top:506px;width:1px;height:21px;background:#ebe3c0"></div><div class="r" style="left:1081px;top:506px;width:1px;height:21px;background:#ebe3c0"></div><div class="r" style="left:1158px;top:506px;width:1px;height:21px;background:#ebe3c0"></div><div class="r" style="left:1183px;top:506px;width:1px;height:21px;background:#ebe3c0"></div><svg class="r" style="left:231px;top:511px" width="10" height="10" viewBox="0 0 10 10"><rect x="0.5" y="0.5" width="8" height="8" fill="#dfe6f2" stroke="#6a7a94"/><path d="M2 4.5h5" stroke="#1a2a48" stroke-width="1.2"/></svg><div class="t" style="left:244.40px;top:511.00px;font-size:11px;color:#000;font-weight:bold;letter-spacing:1.411px;-webkit-text-stroke:0.3px #000;">Enterprise Project Type Name: Software Development</div><div class="t" style="left:607.00px;top:511.00px;font-size:11px;color:#000;font-weight:bold;letter-spacing:2.728px;-webkit-text-stroke:0.3px #000;">1/1/2013</div><div class="t" style="left:707.00px;top:511.00px;font-size:11px;color:#000;font-weight:bold;letter-spacing:2.643px;-webkit-text-stroke:0.3px #000;">2/13/2015</div><div class="t" style="left:807.00px;top:511.00px;font-size:11px;color:#000;font-weight:bold;letter-spacing:1.707px;-webkit-text-stroke:0.3px #000;">25,236.88h</div><div class="t" style="left:987.00px;top:511.00px;font-size:11px;color:#000;font-weight:bold;letter-spacing:1.679px;-webkit-text-stroke:0.3px #000;">9,944.85h</div><div class="r" style="left:165px;top:527px;width:25px;height:21px;background:#dfe2e6;border-bottom:1px solid #a9adb3;border-right:1px solid #9a9ea4"></div><div class="r" style="left:190px;top:547px;width:993px;height:1px;background:#dcdcdc"></div><div class="r" style="left:226px;top:527px;width:1px;height:21px;background:#dcdcdc"></div><div class="r" style="left:601px;top:527px;width:1px;height:21px;background:#dcdcdc"></div><div class="r" style="left:701px;top:527px;width:1px;height:21px;background:#dcdcdc"></div><div class="r" style="left:801px;top:527px;width:1px;height:21px;background:#dcdcdc"></div><div class="r" style="left:901px;top:527px;width:1px;height:21px;background:#dcdcdc"></div><div class="r" style="left:981px;top:527px;width:1px;height:21px;background:#dcdcdc"></div><div class="r" style="left:1081px;top:527px;width:1px;height:21px;background:#dcdcdc"></div><div class="r" style="left:1158px;top:527px;width:1px;height:21px;background:#dcdcdc"></div><div class="r" style="left:1183px;top:527px;width:1px;height:21px;background:#dcdcdc"></div><svg class="r" style="left:194px;top:528px" width="16" height="15" viewBox="0 0 16 15">
<rect x="0.5" y="0.5" width="15" height="14" fill="#fff" stroke="#2a3a5a"/>
<path d="M0.5 14.4h15" stroke="#111" stroke-width="1.1"/>
<rect x="1" y="1" width="14" height="2.2" fill="#7096d0"/>
<path d="M5 9v5M10.5 6v8" stroke="#7a8aa0" stroke-width="0.6"/>
<path d="M3 5.8V4.7H13V5.8" fill="none" stroke="#000" stroke-width="1.3" stroke-linecap="round"/>
<rect x="2.5" y="6.4" width="6" height="2.3" rx="1.15" fill="#8ba7cd" stroke="#2a4470" stroke-width="0.8"/>
<rect x="7.5" y="10.2" width="6" height="2.3" rx="1.15" fill="#8ba7cd" stroke="#2a4470" stroke-width="0.8"/></svg><div class="t" style="left:257.50px;top:532.00px;font-size:11px;color:#2b6d96;letter-spacing:0.812px;">Realtime Report Server Usage Statistics</div><div class="t" style="left:607.00px;top:532.00px;font-size:11px;color:#222;letter-spacing:1.116px;">3/1/2013</div><div class="t" style="left:707.00px;top:532.00px;font-size:11px;color:#222;letter-spacing:1.116px;">5/9/2013</div><div class="t" style="left:807.00px;top:532.00px;font-size:11px;color:#222;letter-spacing:0.848px;">630h</div><div class="t" style="left:907.00px;top:532.00px;font-size:11px;color:#222;letter-spacing:1.176px;">100%</div><div class="t" style="left:987.00px;top:532.00px;font-size:11px;color:#222;letter-spacing:0.848px;">0h</div><svg class="r" style="left:1112px;top:529.4px" width="15" height="15" viewBox="0 0 15 15"><defs><radialGradient id="k17" cx="0.5" cy="0.55" r="0.6"><stop offset="0" stop-color="#9ee09a"/><stop offset="1" stop-color="#3c9c4a"/></radialGradient></defs><circle cx="7.5" cy="7.5" r="6.6" fill="url(#k17)" stroke="#2e5e34" stroke-width="1"/></svg><div class="r" style="left:165px;top:548px;width:25px;height:21px;background:#dfe2e6;border-bottom:1px solid #a9adb3;border-right:1px solid #9a9ea4"></div><div class="r" style="left:190px;top:568px;width:993px;height:1px;background:#dcdcdc"></div><div class="r" style="left:226px;top:548px;width:1px;height:21px;background:#dcdcdc"></div><div class="r" style="left:601px;top:548px;width:1px;height:21px;background:#dcdcdc"></div><div class="r" style="left:701px;top:548px;width:1px;height:21px;background:#dcdcdc"></div><div class="r" style="left:801px;top:548px;width:1px;height:21px;background:#dcdcdc"></div><div class="r" style="left:901px;top:548px;width:1px;height:21px;background:#dcdcdc"></div><div class="r" style="left:981px;top:548px;width:1px;height:21px;background:#dcdcdc"></div><div class="r" style="left:1081px;top:548px;width:1px;height:21px;background:#dcdcdc"></div><div class="r" style="left:1158px;top:548px;width:1px;height:21px;background:#dcdcdc"></div><div class="r" style="left:1183px;top:548px;width:1px;height:21px;background:#dcdcdc"></div><svg class="r" style="left:194px;top:549px" width="16" height="15" viewBox="0 0 16 15">
<rect x="0.5" y="0.5" width="15" height="14" fill="#fff" stroke="#2a3a5a"/>
<path d="M0.5 14.4h15" stroke="#111" stroke-width="1.1"/>
<rect x="1" y="1" width="14" height="2.2" fill="#7096d0"/>
<path d="M5 9v5M10.5 6v8" stroke="#7a8aa0" stroke-width="0.6"/>
<path d="M3 5.8V4.7H13V5.8" fill="none" stroke="#000" stroke-width="1.3" stroke-linecap="round"/>
<rect x="2.5" y="6.4" width="6" height="2.3" rx="1.15" fill="#8ba7cd" stroke="#2a4470" stroke-width="0.8"/>
<rect x="7.5" y="10.2" width="6" height="2.3" rx="1.15" fill="#8ba7cd" stroke="#2a4470" stroke-width="0.8"/></svg><div class="t" style="left:257.50px;top:553.00px;font-size:11px;color:#2b6d96;letter-spacing:0.848px;">Storage Planning and Management System</div><div class="t" style="left:607.00px;top:553.00px;font-size:11px;color:#222;letter-spacing:1.086px;">5/13/2013</div><div class="t" style="left:707.00px;top:553.00px;font-size:11px;color:#222;letter-spacing:1.116px;">8/5/2013</div><div class="t" style="left:807.00px;top:553.00px;font-size:11px;color:#222;letter-spacing:0.859px;">641.95h</div><div class="t" style="left:907.00px;top:553.00px;font-size:11px;color:#222;letter-spacing:1.176px;">100%</div><div class="t" style="left:987.00px;top:553.00px;font-size:11px;color:#222;letter-spacing:0.848px;">0h</div><svg class="r" style="left:1112px;top:550.4px" width="15" height="15" viewBox="0 0 15 15"><defs><radialGradient id="k18" cx="0.5" cy="0.55" r="0.6"><stop offset="0" stop-color="#9ee09a"/><stop offset="1" stop-color="#3c9c4a"/></radialGradient></defs><circle cx="7.5" cy="7.5" r="6.6" fill="url(#k18)" stroke="#2e5e34" stroke-width="1"/></svg><div class="r" style="left:165px;top:569px;width:25px;height:21px;background:#dfe2e6;border-bottom:1px solid #a9adb3;border-right:1px solid #9a9ea4"></div><div class="r" style="left:190px;top:589px;width:993px;height:1px;background:#dcdcdc"></div><div class="r" style="left:226px;top:569px;width:1px;height:21px;background:#dcdcdc"></div><div class="r" style="left:601px;top:569px;width:1px;height:21px;background:#dcdcdc"></div><div class="r" style="left:701px;top:569px;width:1px;height:21px;background:#dcdcdc"></div><div class="r" style="left:801px;top:569px;width:1px;height:21px;background:#dcdcdc"></div><div class="r" style="left:901px;top:569px;width:1px;height:21px;background:#dcdcdc"></div><div class="r" style="left:981px;top:569px;width:1px;height:21px;background:#dcdcdc"></div><div class="r" style="left:1081px;top:569px;width:1px;height:21px;background:#dcdcdc"></div><div class="r" style="left:1158px;top:569px;width:1px;height:21px;background:#dcdcdc"></div><div class="r" style="left:1183px;top:569px;width:1px;height:21px;background:#dcdcdc"></div><svg class="r" style="left:194px;top:570px" width="16" height="15" viewBox="0 0 16 15">
<rect x="0.5" y="0.5" width="15" height="14" fill="#fff" stroke="#2a3a5a"/>
<path d="M0.5 14.4h15" stroke="#111" stroke-width="1.1"/>
<rect x="1" y="1" width="14" height="2.2" fill="#7096d0"/>
<path d="M5 9v5M10.5 6v8" stroke="#7a8aa0" stroke-width="0.6"/>
<path d="M3 5.8V4.7H13V5.8" fill="none" stroke="#000" stroke-width="1.3" stroke-linecap="round"/>
<rect x="2.5" y="6.4" width="6" height="2.3" rx="1.15" fill="#8ba7cd" stroke="#2a4470" stroke-width="0.8"/>
<rect x="7.5" y="10.2" width="6" height="2.3" rx="1.15" fill="#8ba7cd" stroke="#2a4470" stroke-width="0.8"/></svg><svg class="r" style="left:214px;top:572px" width="12" height="13" viewBox="0 0 12 13">
<rect x="0.5" y="0.5" width="11" height="12" fill="#f4c4c4" stroke="#6a5050"/>
<rect x="1" y="1" width="10" height="2.2" fill="#a89c9c"/>
<path d="M2.3 5h2.2M5.5 5h4.5M2.3 7.6h2.2M5.5 7.6h4.5M2.3 10.2h2.2M5.5 10.2h4.5" stroke="#b02828" stroke-width="1.5"/></svg><div class="t" style="left:257.50px;top:574.00px;font-size:11px;color:#2b6d96;letter-spacing:0.841px;">Employee Health Care Database</div><div class="t" style="left:607.00px;top:574.00px;font-size:11px;color:#222;letter-spacing:1.177px;">2/11/2013</div><div class="t" style="left:707.00px;top:574.00px;font-size:11px;color:#222;letter-spacing:1.086px;">12/9/2013</div><div class="t" style="left:807.00px;top:574.00px;font-size:11px;color:#222;letter-spacing:0.859px;">947.66h</div><div class="t" style="left:907.00px;top:574.00px;font-size:11px;color:#222;letter-spacing:1.285px;">84%</div><div class="t" style="left:987.00px;top:574.00px;font-size:11px;color:#222;letter-spacing:0.848px;">160h</div><svg class="r" style="left:1112px;top:571.4px" width="15" height="15" viewBox="0 0 15 15"><defs><radialGradient id="k19" cx="0.5" cy="0.55" r="0.6"><stop offset="0" stop-color="#9ee09a"/><stop offset="1" stop-color="#3c9c4a"/></radialGradient></defs><circle cx="7.5" cy="7.5" r="6.6" fill="url(#k19)" stroke="#2e5e34" stroke-width="1"/></svg><div class="r" style="left:165px;top:590px;width:25px;height:21px;background:#dfe2e6;border-bottom:1px solid #a9adb3;border-right:1px solid #9a9ea4"></div><div class="r" style="left:190px;top:610px;width:993px;height:1px;background:#dcdcdc"></div><div class="r" style="left:226px;top:590px;width:1px;height:21px;background:#dcdcdc"></div><div class="r" style="left:601px;top:590px;width:1px;height:21px;background:#dcdcdc"></div><div class="r" style="left:701px;top:590px;width:1px;height:21px;background:#dcdcdc"></div><div class="r" style="left:801px;top:590px;width:1px;height:21px;background:#dcdcdc"></div><div class="r" style="left:901px;top:590px;width:1px;height:21px;background:#dcdcdc"></div><div class="r" style="left:981px;top:590px;width:1px;height:21px;background:#dcdcdc"></div><div class="r" style="left:1081px;top:590px;width:1px;height:21px;background:#dcdcdc"></div><div class="r" style="left:1158px;top:590px;width:1px;height:21px;background:#dcdcdc"></div><div class="r" style="left:1183px;top:590px;width:1px;height:21px;background:#dcdcdc"></div><svg class="r" style="left:194px;top:591px" width="16" height="15" viewBox="0 0 16 15">
<rect x="0.5" y="0.5" width="15" height="14" fill="#fff" stroke="#2a3a5a"/>
<path d="M0.5 14.4h15" stroke="#111" stroke-width="1.1"/>
<rect x="1" y="1" width="14" height="2.2" fill="#7096d0"/>
<path d="M5 9v5M10.5 6v8" stroke="#7a8aa0" stroke-width="0.6"/>
<path d="M3 5.8V4.7H13V5.8" fill="none" stroke="#000" stroke-width="1.3" stroke-linecap="round"/>
<rect x="2.5" y="6.4" width="6" height="2.3" rx="1.15" fill="#8ba7cd" stroke="#2a4470" stroke-width="0.8"/>
<rect x="7.5" y="10.2" width="6" height="2.3" rx="1.15" fill="#8ba7cd" stroke="#2a4470" stroke-width="0.8"/></svg><div class="t" style="left:257.50px;top:595.00px;font-size:11px;color:#2b6d96;letter-spacing:1.001px;">Tornado Infrastructure Development</div><div class="t" style="left:607.00px;top:595.00px;font-size:11px;color:#222;letter-spacing:1.116px;">4/1/2013</div><div class="t" style="left:707.00px;top:595.00px;font-size:11px;color:#222;letter-spacing:1.086px;">1/20/2014</div><div class="t" style="left:807.00px;top:595.00px;font-size:11px;color:#222;letter-spacing:0.865px;">1,890.64h</div><div class="t" style="left:907.00px;top:595.00px;font-size:11px;color:#222;letter-spacing:1.285px;">76%</div><div class="t" style="left:987.00px;top:595.00px;font-size:11px;color:#222;letter-spacing:0.859px;">445.97h</div><svg class="r" style="left:1112px;top:592.4px" width="15" height="15" viewBox="0 0 15 15"><defs><radialGradient id="k20" cx="0.5" cy="0.55" r="0.6"><stop offset="0" stop-color="#9ee09a"/><stop offset="1" stop-color="#3c9c4a"/></radialGradient></defs><circle cx="7.5" cy="7.5" r="6.6" fill="url(#k20)" stroke="#2e5e34" stroke-width="1"/></svg><div class="r" style="left:165px;top:611px;width:25px;height:21px;background:#dfe2e6;border-bottom:1px solid #a9adb3;border-right:1px solid #9a9ea4"></div><div class="r" style="left:190px;top:631px;width:993px;height:1px;background:#dcdcdc"></div><div class="r" style="left:226px;top:611px;width:1px;height:21px;background:#dcdcdc"></div><div class="r" style="left:601px;top:611px;width:1px;height:21px;background:#dcdcdc"></div><div class="r" style="left:701px;top:611px;width:1px;height:21px;background:#dcdcdc"></div><div class="r" style="left:801px;top:611px;width:1px;height:21px;background:#dcdcdc"></div><div class="r" style="left:901px;top:611px;width:1px;height:21px;background:#dcdcdc"></div><div class="r" style="left:981px;top:611px;width:1px;height:21px;background:#dcdcdc"></div><div class="r" style="left:1081px;top:611px;width:1px;height:21px;background:#dcdcdc"></div><div class="r" style="left:1158px;top:611px;width:1px;height:21px;background:#dcdcdc"></div><div class="r" style="left:1183px;top:611px;width:1px;height:21px;background:#dcdcdc"></div><svg class="r" style="left:194px;top:612px" width="16" height="15" viewBox="0 0 16 15">
<rect x="0.5" y="0.5" width="15" height="14" fill="#fff" stroke="#2a3a5a"/>
<path d="M0.5 14.4h15" stroke="#111" stroke-width="1.1"/>
<rect x="1" y="1" width="14" height="2.2" fill="#7096d0"/>
<path d="M5 9v5M10.5 6v8" stroke="#7a8aa0" stroke-width="0.6"/>
<path d="M3 5.8V4.7H13V5.8" fill="none" stroke="#000" stroke-width="1.3" stroke-linecap="round"/>
<rect x="2.5" y="6.4" width="6" height="2.3" rx="1.15" fill="#8ba7cd" stroke="#2a4470" stroke-width="0.8"/>
<rect x="7.5" y="10.2" width="6" height="2.3" rx="1.15" fill="#8ba7cd" stroke="#2a4470" stroke-width="0.8"/></svg><svg class="r" style="left:214px;top:614px" width="12" height="13" viewBox="0 0 12 13">
<rect x="0.5" y="0.5" width="11" height="12" fill="#f4c4c4" stroke="#6a5050"/>
<rect x="1" y="1" width="10" height="2.2" fill="#a89c9c"/>
<path d="M2.3 5h2.2M5.5 5h4.5M2.3 7.6h2.2M5.5 7.6h4.5M2.3 10.2h2.2M5.5 10.2h4.5" stroke="#b02828" stroke-width="1.5"/></svg><div class="t" style="left:257.50px;top:616.00px;font-size:11px;color:#2b6d96;letter-spacing:0.862px;">Butterball API for Drone Flyer</div><div class="t" style="left:607.00px;top:616.00px;font-size:11px;color:#222;letter-spacing:1.177px;">2/11/2013</div><div class="t" style="left:707.00px;top:616.00px;font-size:11px;color:#222;letter-spacing:1.086px;">1/23/2014</div><div class="t" style="left:807.00px;top:616.00px;font-size:11px;color:#222;letter-spacing:0.865px;">3,306.99h</div><div class="t" style="left:907.00px;top:616.00px;font-size:11px;color:#222;letter-spacing:1.285px;">76%</div><div class="t" style="left:987.00px;top:616.00px;font-size:11px;color:#222;letter-spacing:0.859px;">637.86h</div><svg class="r" style="left:1112px;top:613.4px" width="15" height="15" viewBox="0 0 15 15"><defs><radialGradient id="k21" cx="0.5" cy="0.55" r="0.6"><stop offset="0" stop-color="#9ee09a"/><stop offset="1" stop-color="#3c9c4a"/></radialGradient></defs><circle cx="7.5" cy="7.5" r="6.6" fill="url(#k21)" stroke="#2e5e34" stroke-width="1"/></svg><div class="r" style="left:165px;top:632px;width:25px;height:21px;background:#dfe2e6;border-bottom:1px solid #a9adb3;border-right:1px solid #9a9ea4"></div><div class="r" style="left:190px;top:652px;width:993px;height:1px;background:#dcdcdc"></div><div class="r" style="left:226px;top:632px;width:1px;height:21px;background:#dcdcdc"></div><div class="r" style="left:601px;top:632px;width:1px;height:21px;background:#dcdcdc"></div><div class="r" style="left:701px;top:632px;width:1px;height:21px;background:#dcdcdc"></div><div class="r" style="left:801px;top:632px;width:1px;height:21px;background:#dcdcdc"></div><div class="r" style="left:901px;top:632px;width:1px;height:21px;background:#dcdcdc"></div><div class="r" style="left:981px;top:632px;width:1px;height:21px;background:#dcdcdc"></div><div class="r" style="left:1081px;top:632px;width:1px;height:21px;background:#dcdcdc"></div><div class="r" style="left:1158px;top:632px;width:1px;height:21px;background:#dcdcdc"></div><div class="r" style="left:1183px;top:632px;width:1px;height:21px;background:#dcdcdc"></div><svg class="r" style="left:194px;top:633px" width="16" height="15" viewBox="0 0 16 15">
<rect x="0.5" y="0.5" width="15" height="14" fill="#fff" stroke="#2a3a5a"/>
<path d="M0.5 14.4h15" stroke="#111" stroke-width="1.1"/>
<rect x="1" y="1" width="14" height="2.2" fill="#7096d0"/>
<path d="M5 9v5M10.5 6v8" stroke="#7a8aa0" stroke-width="0.6"/>
<path d="M3 5.8V4.7H13V5.8" fill="none" stroke="#000" stroke-width="1.3" stroke-linecap="round"/>
<rect x="2.5" y="6.4" width="6" height="2.3" rx="1.15" fill="#8ba7cd" stroke="#2a4470" stroke-width="0.8"/>
<rect x="7.5" y="10.2" width="6" height="2.3" rx="1.15" fill="#8ba7cd" stroke="#2a4470" stroke-width="0.8"/></svg><svg class="r" style="left:214px;top:635px" width="12" height="13" viewBox="0 0 12 13">
<rect x="0.5" y="0.5" width="11" height="12" fill="#f4c4c4" stroke="#6a5050"/>
<rect x="1" y="1" width="10" height="2.2" fill="#a89c9c"/>
<path d="M2.3 5h2.2M5.5 5h4.5M2.3 7.6h2.2M5.5 7.6h4.5M2.3 10.2h2.2M5.5 10.2h4.5" stroke="#b02828" stroke-width="1.5"/></svg><div class="t" style="left:257.50px;top:637.00px;font-size:11px;color:#2b6d96;letter-spacing:0.878px;">Develop a Ledger Tracking system for Newco</div><div class="t" style="left:607.00px;top:637.00px;font-size:11px;color:#222;letter-spacing:1.116px;">6/3/2013</div><div class="t" style="left:707.00px;top:637.00px;font-size:11px;color:#222;letter-spacing:1.086px;">1/28/2014</div><div class="t" style="left:807.00px;top:637.00px;font-size:11px;color:#222;letter-spacing:0.861px;">1,374h</div><div class="t" style="left:907.00px;top:637.00px;font-size:11px;color:#222;letter-spacing:1.285px;">68%</div><div class="t" style="left:987.00px;top:637.00px;font-size:11px;color:#222;letter-spacing:0.848px;">389h</div><svg class="r" style="left:1112px;top:634.4px" width="15" height="15" viewBox="0 0 15 15"><defs><radialGradient id="k22" cx="0.5" cy="0.55" r="0.6"><stop offset="0" stop-color="#9ee09a"/><stop offset="1" stop-color="#3c9c4a"/></radialGradient></defs><circle cx="7.5" cy="7.5" r="6.6" fill="url(#k22)" stroke="#2e5e34" stroke-width="1"/></svg><div class="r" style="left:165px;top:653px;width:25px;height:21px;background:#dfe2e6;border-bottom:1px solid #a9adb3;border-right:1px solid #9a9ea4"></div><div class="r" style="left:190px;top:673px;width:993px;height:1px;background:#dcdcdc"></div><div class="r" style="left:226px;top:653px;width:1px;height:21px;background:#dcdcdc"></div><div class="r" style="left:601px;top:653px;width:1px;height:21px;background:#dcdcdc"></div><div class="r" style="left:701px;top:653px;width:1px;height:21px;background:#dcdcdc"></div><div class="r" style="left:801px;top:653px;width:1px;height:21px;background:#dcdcdc"></div><div class="r" style="left:901px;top:653px;width:1px;height:21px;background:#dcdcdc"></div><div class="r" style="left:981px;top:653px;width:1px;height:21px;background:#dcdcdc"></div><div class="r" style="left:1081px;top:653px;width:1px;height:21px;background:#dcdcdc"></div><div class="r" style="left:1158px;top:653px;width:1px;height:21px;background:#dcdcdc"></div><div class="r" style="left:1183px;top:653px;width:1px;height:21px;background:#dcdcdc"></div><svg class="r" style="left:194px;top:654px" width="16" height="15" viewBox="0 0 16 15">
<rect x="0.5" y="0.5" width="15" height="14" fill="#fff" stroke="#2a3a5a"/>
<path d="M0.5 14.4h15" stroke="#111" stroke-width="1.1"/>
<rect x="1" y="1" width="14" height="2.2" fill="#7096d0"/>
<path d="M5 9v5M10.5 6v8" stroke="#7a8aa0" stroke-width="0.6"/>
<path d="M3 5.8V4.7H13V5.8" fill="none" stroke="#000" stroke-width="1.3" stroke-linecap="round"/>
<rect x="2.5" y="6.4" width="6" height="2.3" rx="1.15" fill="#8ba7cd" stroke="#2a4470" stroke-width="0.8"/>
<rect x="7.5" y="10.2" width="6" height="2.3" rx="1.15" fill="#8ba7cd" stroke="#2a4470" stroke-width="0.8"/></svg><svg class="r" style="left:214px;top:656px" width="12" height="13" viewBox="0 0 12 13">
<rect x="0.5" y="0.5" width="11" height="12" fill="#f4c4c4" stroke="#6a5050"/>
<rect x="1" y="1" width="10" height="2.2" fill="#a89c9c"/>
<path d="M2.3 5h2.2M5.5 5h4.5M2.3 7.6h2.2M5.5 7.6h4.5M2.3 10.2h2.2M5.5 10.2h4.5" stroke="#b02828" stroke-width="1.5"/></svg><div class="t" style="left:257.50px;top:658.00px;font-size:11px;color:#2b6d96;letter-spacing:0.954px;">Develop Hammerhead Interface</div><div class="t" style="left:607.00px;top:658.00px;font-size:11px;color:#222;letter-spacing:1.116px;">1/1/2013</div><div class="t" style="left:707.00px;top:658.00px;font-size:11px;color:#222;letter-spacing:1.116px;">2/5/2014</div><div class="t" style="left:807.00px;top:658.00px;font-size:11px;color:#222;letter-spacing:0.861px;">2,170h</div><div class="t" style="left:907.00px;top:658.00px;font-size:11px;color:#222;letter-spacing:1.285px;">83%</div><div class="t" style="left:987.00px;top:658.00px;font-size:11px;color:#222;letter-spacing:0.861px;">293.6h</div><svg class="r" style="left:1112px;top:655.4px" width="15" height="15" viewBox="0 0 15 15"><defs><radialGradient id="k23" cx="0.5" cy="0.55" r="0.6"><stop offset="0" stop-color="#fff0a0"/><stop offset="1" stop-color="#f4c232"/></radialGradient></defs><circle cx="7.5" cy="7.5" r="6.6" fill="url(#k23)" stroke="#9a7420" stroke-width="1"/></svg><div class="r" style="left:165px;top:674px;width:25px;height:21px;background:#dfe2e6;border-bottom:1px solid #a9adb3;border-right:1px solid #9a9ea4"></div><div class="r" style="left:190px;top:694px;width:993px;height:1px;background:#dcdcdc"></div><div class="r" style="left:226px;top:674px;width:1px;height:21px;background:#dcdcdc"></div><div class="r" style="left:601px;top:674px;width:1px;height:21px;background:#dcdcdc"></div><div class="r" style="left:701px;top:674px;width:1px;height:21px;background:#dcdcdc"></div><div class="r" style="left:801px;top:674px;width:1px;height:21px;background:#dcdcdc"></div><div class="r" style="left:901px;top:674px;width:1px;height:21px;background:#dcdcdc"></div><div class="r" style="left:981px;top:674px;width:1px;height:21px;background:#dcdcdc"></div><div class="r" style="left:1081px;top:674px;width:1px;height:21px;background:#dcdcdc"></div><div class="r" style="left:1158px;top:674px;width:1px;height:21px;background:#dcdcdc"></div><div class="r" style="left:1183px;top:674px;width:1px;height:21px;background:#dcdcdc"></div><svg class="r" style="left:194px;top:675px" width="16" height="15" viewBox="0 0 16 15">
<rect x="0.5" y="0.5" width="15" height="14" fill="#fff" stroke="#2a3a5a"/>
<path d="M0.5 14.4h15" stroke="#111" stroke-width="1.1"/>
<rect x="1" y="1" width="14" height="2.2" fill="#7096d0"/>
<path d="M5 9v5M10.5 6v8" stroke="#7a8aa0" stroke-width="0.6"/>
<path d="M3 5.8V4.7H13V5.8" fill="none" stroke="#000" stroke-width="1.3" stroke-linecap="round"/>
<rect x="2.5" y="6.4" width="6" height="2.3" rx="1.15" fill="#8ba7cd" stroke="#2a4470" stroke-width="0.8"/>
<rect x="7.5" y="10.2" width="6" height="2.3" rx="1.15" fill="#8ba7cd" stroke="#2a4470" stroke-width="0.8"/></svg><div class="t" style="left:257.50px;top:679.00px;font-size:11px;color:#2b6d96;letter-spacing:0.920px;">Tacoma System R100 Design and Development</div><div class="t" style="left:607.00px;top:679.00px;font-size:11px;color:#222;letter-spacing:1.116px;">4/8/2013</div><div class="t" style="left:707.00px;top:679.00px;font-size:11px;color:#222;letter-spacing:1.086px;">2/14/2014</div><div class="t" style="left:807.00px;top:679.00px;font-size:11px;color:#222;letter-spacing:0.865px;">2,398.04h</div><div class="t" style="left:907.00px;top:679.00px;font-size:11px;color:#222;letter-spacing:1.285px;">77%</div><div class="t" style="left:987.00px;top:679.00px;font-size:11px;color:#222;letter-spacing:0.859px;">550.05h</div><svg class="r" style="left:1112px;top:676.4px" width="15" height="15" viewBox="0 0 15 15"><defs><radialGradient id="k24" cx="0.5" cy="0.55" r="0.6"><stop offset="0" stop-color="#9ee09a"/><stop offset="1" stop-color="#3c9c4a"/></radialGradient></defs><circle cx="7.5" cy="7.5" r="6.6" fill="url(#k24)" stroke="#2e5e34" stroke-width="1"/></svg><div class="r" style="left:165px;top:695px;width:25px;height:21px;background:#dfe2e6;border-bottom:1px solid #a9adb3;border-right:1px solid #9a9ea4"></div><div class="r" style="left:190px;top:715px;width:993px;height:1px;background:#dcdcdc"></div><div class="r" style="left:226px;top:695px;width:1px;height:21px;background:#dcdcdc"></div><div class="r" style="left:601px;top:695px;width:1px;height:21px;background:#dcdcdc"></div><div class="r" style="left:701px;top:695px;width:1px;height:21px;background:#dcdcdc"></div><div class="r" style="left:801px;top:695px;width:1px;height:21px;background:#dcdcdc"></div><div class="r" style="left:901px;top:695px;width:1px;height:21px;background:#dcdcdc"></div><div class="r" style="left:981px;top:695px;width:1px;height:21px;background:#dcdcdc"></div><div class="r" style="left:1081px;top:695px;width:1px;height:21px;background:#dcdcdc"></div><div class="r" style="left:1158px;top:695px;width:1px;height:21px;background:#dcdcdc"></div><div class="r" style="left:1183px;top:695px;width:1px;height:21px;background:#dcdcdc"></div><svg class="r" style="left:194px;top:696px" width="16" height="15" viewBox="0 0 16 15">
<rect x="0.5" y="0.5" width="15" height="14" fill="#fff" stroke="#2a3a5a"/>
<path d="M0.5 14.4h15" stroke="#111" stroke-width="1.1"/>
<rect x="1" y="1" width="14" height="2.2" fill="#7096d0"/>
<path d="M5 9v5M10.5 6v8" stroke="#7a8aa0" stroke-width="0.6"/>
<path d="M3 5.8V4.7H13V5.8" fill="none" stroke="#000" stroke-width="1.3" stroke-linecap="round"/>
<rect x="2.5" y="6.4" width="6" height="2.3" rx="1.15" fill="#8ba7cd" stroke="#2a4470" stroke-width="0.8"/>
<rect x="7.5" y="10.2" width="6" height="2.3" rx="1.15" fill="#8ba7cd" stroke="#2a4470" stroke-width="0.8"/></svg><div class="t" style="left:257.50px;top:700.00px;font-size:11px;color:#2b6d96;letter-spacing:0.823px;">Tracking System for Finance</div><div class="t" style="left:607.00px;top:700.00px;font-size:11px;color:#222;letter-spacing:1.086px;">5/28/2013</div><div class="t" style="left:707.00px;top:700.00px;font-size:11px;color:#222;letter-spacing:1.086px;">2/20/2014</div><div class="t" style="left:807.00px;top:700.00px;font-size:11px;color:#222;letter-spacing:0.848px;">624h</div><div class="t" style="left:907.00px;top:700.00px;font-size:11px;color:#222;letter-spacing:1.285px;">88%</div><div class="t" style="left:987.00px;top:700.00px;font-size:11px;color:#222;letter-spacing:0.863px;">77.4h</div><svg class="r" style="left:1112px;top:697.4px" width="15" height="15" viewBox="0 0 15 15"><defs><radialGradient id="k25" cx="0.5" cy="0.55" r="0.6"><stop offset="0" stop-color="#ffc0c0"/><stop offset="1" stop-color="#e25a5a"/></radialGradient></defs><circle cx="7.5" cy="7.5" r="6.6" fill="url(#k25)" stroke="#8a3434" stroke-width="1"/></svg><div class="r" style="left:165px;top:716px;width:25px;height:21px;background:#dfe2e6;border-bottom:1px solid #a9adb3;border-right:1px solid #9a9ea4"></div><div class="r" style="left:190px;top:736px;width:993px;height:1px;background:#dcdcdc"></div><div class="r" style="left:226px;top:716px;width:1px;height:21px;background:#dcdcdc"></div><div class="r" style="left:601px;top:716px;width:1px;height:21px;background:#dcdcdc"></div><div class="r" style="left:701px;top:716px;width:1px;height:21px;background:#dcdcdc"></div><div class="r" style="left:801px;top:716px;width:1px;height:21px;background:#dcdcdc"></div><div class="r" style="left:901px;top:716px;width:1px;height:21px;background:#dcdcdc"></div><div class="r" style="left:981px;top:716px;width:1px;height:21px;background:#dcdcdc"></div><div class="r" style="left:1081px;top:716px;width:1px;height:21px;background:#dcdcdc"></div><div class="r" style="left:1158px;top:716px;width:1px;height:21px;background:#dcdcdc"></div><div class="r" style="left:1183px;top:716px;width:1px;height:21px;background:#dcdcdc"></div><svg class="r" style="left:194px;top:717px" width="16" height="15" viewBox="0 0 16 15">
<rect x="0.5" y="0.5" width="15" height="14" fill="#fff" stroke="#2a3a5a"/>
<path d="M0.5 14.4h15" stroke="#111" stroke-width="1.1"/>
<rect x="1" y="1" width="14" height="2.2" fill="#7096d0"/>
<path d="M5 9v5M10.5 6v8" stroke="#7a8aa0" stroke-width="0.6"/>
<path d="M3 5.8V4.7H13V5.8" fill="none" stroke="#000" stroke-width="1.3" stroke-linecap="round"/>
<rect x="2.5" y="6.4" width="6" height="2.3" rx="1.15" fill="#8ba7cd" stroke="#2a4470" stroke-width="0.8"/>
<rect x="7.5" y="10.2" width="6" height="2.3" rx="1.15" fill="#8ba7cd" stroke="#2a4470" stroke-width="0.8"/></svg><svg class="r" style="left:213px;top:717.5px" width="14" height="15" viewBox="0 0 14 15">
<path d="M9 0.8L13.6 14.3H1.2Z" fill="#f4dc50" stroke="#8a7420" stroke-width="0.9"/>
<path d="M9 4.5l-0.6 6.5h1.3z" fill="#222" stroke="#222" stroke-width="0.8"/><circle cx="8.8" cy="12.6" r="0.9" fill="#222"/></svg><div class="t" style="left:257.50px;top:721.00px;font-size:11px;color:#2b6d96;letter-spacing:0.943px;">Capital Inventory Database</div><div class="t" style="left:607.00px;top:721.00px;font-size:11px;color:#222;letter-spacing:1.086px;">6/10/2013</div><div class="t" style="left:707.00px;top:721.00px;font-size:11px;color:#222;letter-spacing:1.177px;">3/11/2014</div><div class="t" style="left:807.00px;top:721.00px;font-size:11px;color:#222;letter-spacing:0.867px;">2,555.4h</div><div class="t" style="left:907.00px;top:721.00px;font-size:11px;color:#222;letter-spacing:1.285px;">50%</div><div class="t" style="left:987.00px;top:721.00px;font-size:11px;color:#222;letter-spacing:0.865px;">1,109.75h</div><svg class="r" style="left:1112px;top:718.4px" width="15" height="15" viewBox="0 0 15 15"><defs><radialGradient id="k26" cx="0.5" cy="0.55" r="0.6"><stop offset="0" stop-color="#9ee09a"/><stop offset="1" stop-color="#3c9c4a"/></radialGradient></defs><circle cx="7.5" cy="7.5" r="6.6" fill="url(#k26)" stroke="#2e5e34" stroke-width="1"/></svg><div class="r" style="left:165px;top:169px;width:25px;height:22px;background:linear-gradient(#fbd46a,#f9cf58);border-bottom:1px solid #b89030;border-right:1px solid #b89030"></div><div class="r" style="left:190px;top:168px;width:37px;height:23px;background:#fff4c4;border:3px solid #222"></div><div class="r" style="left:1183px;top:136px;width:6px;height:598px;background:#e0e2e7;border-left:1px solid #a0a4aa;border-right:1px solid #a0a4aa"></div><div class="r" style="left:1184px;top:452px;width:3px;height:8px;background:repeating-linear-gradient(#8a8a8a 0 1px,#e2e4e8 1px 2px)"></div><div class="r" style="left:1189px;top:136px;width:57px;height:598px;background:#fff"></div><div class="r" style="left:1189px;top:136px;width:57px;height:33px;background:linear-gradient(#eceef2,#e3e5e9 60%,#dcdfe4);border-bottom:1px solid #a9adb3"></div><div class="r" style="left:1189px;top:154px;width:56px;height:1px;background:#cdd0d5"></div><div class="t" style="left:1189.00px;top:143.00px;font-size:11px;color:#3b3b3b;letter-spacing:0.316px;">013</div><div class="t" style="left:1194.00px;top:157.00px;font-size:11px;color:#3b3b3b;">T</div><div class="t" style="left:1210.50px;top:157.00px;font-size:11px;color:#3b3b3b;">W</div><div class="t" style="left:1229.50px;top:157.00px;font-size:11px;color:#3b3b3b;">T</div><div class="r" style="left:1206px;top:155px;width:1px;height:13px;background:#cfd2d7"></div><div class="r" style="left:1224px;top:155px;width:1px;height:13px;background:#cfd2d7"></div><div class="r" style="left:1242px;top:155px;width:1px;height:13px;background:#cfd2d7"></div><div class="r" style="left:1189px;top:173px;width:56px;height:6px;background:linear-gradient(#111 0,#111 1px,#9a9a9a 1px,#a4a4a4 3px,#7a7a7a 5px,#111 5px,#111 6px)"></div><div class="r" style="left:1189px;top:446px;width:56px;height:6px;background:linear-gradient(#111 0,#111 1px,#9a9a9a 1px,#a4a4a4 3px,#7a7a7a 5px,#111 5px,#111 6px)"></div><div class="r" style="left:1189px;top:509px;width:56px;height:6px;background:linear-gradient(#111 0,#111 1px,#9a9a9a 1px,#a4a4a4 3px,#7a7a7a 5px,#111 5px,#111 6px)"></div><div class="r" style="left:1189px;top:215px;width:56px;height:12px;background:linear-gradient(#3a5ea8,#8fa9d6 35%,#b3c7e6 50%,#7e9bcf 70%,#2f539c)"></div><div class="r" style="left:1189px;top:236px;width:56px;height:12px;background:linear-gradient(#3a5ea8,#8fa9d6 35%,#b3c7e6 50%,#7e9bcf 70%,#2f539c)"></div><div class="r" style="left:1189px;top:257px;width:56px;height:12px;background:linear-gradient(#3a5ea8,#8fa9d6 35%,#b3c7e6 50%,#7e9bcf 70%,#2f539c)"></div><div class="r" style="left:1189px;top:320px;width:56px;height:12px;background:linear-gradient(#3a5ea8,#8fa9d6 35%,#b3c7e6 50%,#7e9bcf 70%,#2f539c)"></div><div class="r" style="left:1189px;top:341px;width:56px;height:12px;background:linear-gradient(#3a5ea8,#8fa9d6 35%,#b3c7e6 50%,#7e9bcf 70%,#2f539c)"></div><div class="r" style="left:1189px;top:488px;width:56px;height:12px;background:linear-gradient(#3a5ea8,#8fa9d6 35%,#b3c7e6 50%,#7e9bcf 70%,#2f539c)"></div><div class="r" style="left:1189px;top:530px;width:56px;height:12px;background:linear-gradient(#3a5ea8,#8fa9d6 35%,#b3c7e6 50%,#7e9bcf 70%,#2f539c)"></div><div class="r" style="left:1189px;top:572px;width:56px;height:12px;background:linear-gradient(#3a5ea8,#8fa9d6 35%,#b3c7e6 50%,#7e9bcf 70%,#2f539c)"></div><div class="r" style="left:1189px;top:614px;width:56px;height:12px;background:linear-gradient(#3a5ea8,#8fa9d6 35%,#b3c7e6 50%,#7e9bcf 70%,#2f539c)"></div><div class="r" style="left:1189px;top:656px;width:56px;height:12px;background:linear-gradient(#3a5ea8,#8fa9d6 35%,#b3c7e6 50%,#7e9bcf 70%,#2f539c)"></div><div class="r" style="left:1246px;top:136px;width:16px;height:598px;background:#eeeff1"></div><svg class="r" style="left:1249px;top:142px" width="9" height="6" viewBox="0 0 9 6"><path d="M0 5H8L4 0Z" fill="#777"/></svg><div class="r" style="left:1246px;top:155px;width:15px;height:496px;background:linear-gradient(90deg,#eef0f2,#dfe1e5);border:1px solid #a6a9ae;border-radius:1px"></div><div class="r" style="left:1250px;top:399px;width:6px;height:1px;background:#777"></div><div class="r" style="left:1250px;top:401px;width:6px;height:1px;background:#777"></div><div class="r" style="left:1250px;top:403px;width:6px;height:1px;background:#777"></div><div class="r" style="left:0px;top:734px;width:1264px;height:3px;background:#000"></div><div class="r" style="left:1262px;top:0px;width:2px;height:737px;background:#000"></div></body></html>
